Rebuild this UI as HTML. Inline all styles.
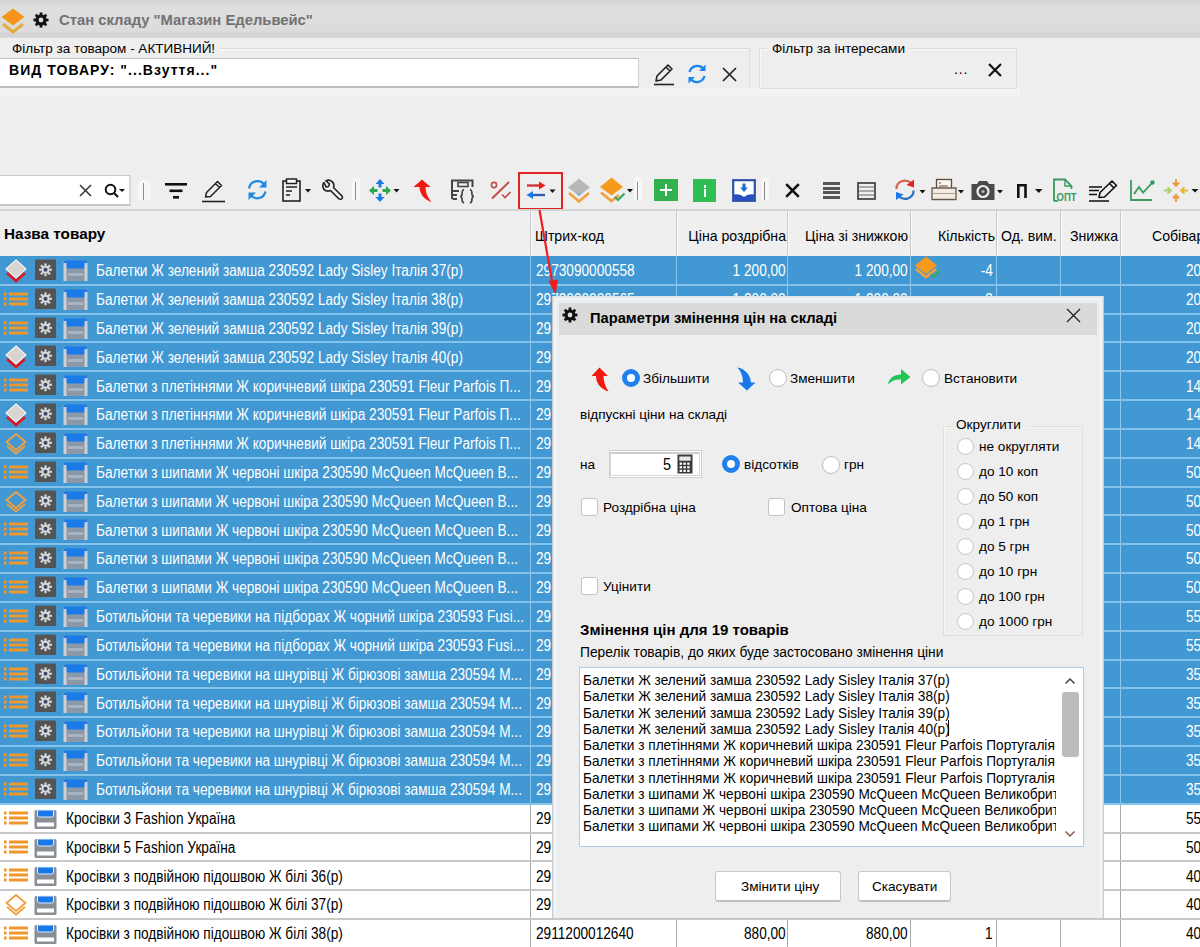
<!DOCTYPE html>
<html><head><meta charset="utf-8">
<style>
*{box-sizing:border-box;margin:0;padding:0}
html,body{width:1200px;height:947px;overflow:hidden;background:#eeeeee;font-family:"Liberation Sans",sans-serif;color:#000}
body{position:relative}
.a{position:absolute}
.t{position:absolute;white-space:nowrap;line-height:1}
svg{display:block}
.r{position:absolute;left:0;width:1200px}
.c{position:absolute;top:1.2px;height:100%;white-space:nowrap;font-size:15.6px;line-height:28px;transform:scaleX(0.875);transform-origin:0 50%}
.cr{transform-origin:100% 50%}
.sel .c{color:#fff}
</style></head><body>

<div class="a" style="left:0;top:0;width:1200px;height:38px;background:linear-gradient(#d2d2d2 0px,#dedede 7px,#dcdcdc 31px,#d3d3d3 34px,#d3d3d3 37px,#e4e4e4 38px)"></div>
<div class="a" style="left:0;top:4px"><svg width="28" height="32" viewBox="0 0 28 32"><path d="M3 20 L13 28 L23 20" fill="none" stroke="#e4ac40" stroke-width="3.2"/><path d="M13 4.5 L24.5 13 L13 21.5 L1.5 13 Z" fill="#f7941a"/></svg></div>
<div class="a" style="left:33px;top:12px"><svg width="16" height="16" viewBox="0 0 16 16"><g fill="#111"><circle cx="8" cy="8" r="5.5"/><rect x="6.6" y="0.5" width="2.8" height="4" transform="rotate(0 8 8)"/><rect x="6.6" y="0.5" width="2.8" height="4" transform="rotate(45 8 8)"/><rect x="6.6" y="0.5" width="2.8" height="4" transform="rotate(90 8 8)"/><rect x="6.6" y="0.5" width="2.8" height="4" transform="rotate(135 8 8)"/><rect x="6.6" y="0.5" width="2.8" height="4" transform="rotate(180 8 8)"/><rect x="6.6" y="0.5" width="2.8" height="4" transform="rotate(225 8 8)"/><rect x="6.6" y="0.5" width="2.8" height="4" transform="rotate(270 8 8)"/><rect x="6.6" y="0.5" width="2.8" height="4" transform="rotate(315 8 8)"/></g><circle cx="8" cy="8" r="2.4" fill="#ddd"/></svg></div>
<div class="t" style="left:59px;top:13px;font-size:14.8px;font-weight:bold;color:#727272">Стан складу "Магазин Едельвейс"</div>
<div class="a" style="left:0;top:48px;width:750px;height:41px;border-top:1px solid #dcdcdc;border-right:1px solid #dcdcdc;box-shadow:inset 0 1px 0 #fafafa"></div>
<div class="a" style="left:0px;top:41px;width:220px;height:16px;background:#eeeeee"></div>
<div class="t" style="left:12px;top:42px;font-size:13.5px">Фільтр за товаром - АКТИВНИЙ!</div>
<div class="a" style="left:0;top:88px;width:1020px;height:8px;background:#f3f3f3"></div>
<div class="a" style="left:0;top:58px;width:639px;height:30px;background:#fff;border-top:1px solid #bdbdbd;border-bottom:2px solid #bdbdbd;border-right:1px solid #d0d0d0"></div>
<div class="t" style="left:9px;top:63px;font-size:14px;font-weight:bold;letter-spacing:1.05px">ВИД ТОВАРУ: "...Взуття..."</div>
<div class="a" style="left:652px;top:62px"><svg width="24" height="24" viewBox="0 0 24 24"><path d="M4 19 L5 14 L16 3 L20 7 L9 18 Z M14 5 L18 9" fill="none" stroke="#222" stroke-width="1.6" stroke-linejoin="round"/><path d="M2 22.5 H22" stroke="#222" stroke-width="1.6"/></svg></div>
<div class="a" style="left:686px;top:63px"><svg width="22" height="22" viewBox="0 0 22 22"><path d="M3.5 9 A8 8 0 0 1 17.5 6" fill="none" stroke="#1a86f0" stroke-width="2.2"/><path d="M19.5 1.5 V8 H13 Z" fill="#1a86f0"/><path d="M18.5 13 A8 8 0 0 1 4.5 16" fill="none" stroke="#1a86f0" stroke-width="2.2"/><path d="M2.5 20.5 V14 H9 Z" fill="#1a86f0"/></svg></div>
<div class="a" style="left:722px;top:67px"><svg width="15" height="15" viewBox="0 0 15 15"><path d="M1 1 L14 14 M14 1 L1 14" stroke="#222" stroke-width="1.7"/></svg></div>
<div class="a" style="left:759px;top:48px;width:258px;height:41px;border:1px solid #dcdcdc;box-shadow:inset 1px 1px 0 #fafafa"></div>
<div class="a" style="left:767px;top:41px;width:142px;height:16px;background:#eeeeee"></div>
<div class="t" style="left:772px;top:42px;font-size:13.6px">Фільтр за інтересами</div>
<div class="t" style="left:954px;top:61.5px;font-size:14px;letter-spacing:0.9px">...</div>
<div class="a" style="left:987px;top:62px"><svg width="16" height="16" viewBox="0 0 16 16"><path d="M2 2 L14 14 M14 2 L2 14" stroke="#111" stroke-width="2.2"/></svg></div>
<div class="a" style="left:0;top:175px;width:131px;height:31px;background:#fff;border-top:1px solid #c8c8c8;border-bottom:2px solid #c8c8c8;border-right:2px solid #d8d8d8"></div>
<div class="a" style="left:79px;top:184px"><svg width="13" height="13" viewBox="0 0 13 13"><path d="M1 1 L12 12 M12 1 L1 12" stroke="#333" stroke-width="1.5"/></svg></div>
<div class="a" style="left:104px;top:183px"><svg width="24" height="16" viewBox="0 0 24 16"><circle cx="6.5" cy="6.5" r="4.8" fill="none" stroke="#111" stroke-width="2"/><path d="M10 10 L14 14" stroke="#111" stroke-width="2.2"/><path d="M15 6 H21 L18 9 Z" fill="#111"/></svg></div>
<!-- toolbar separators -->
<div class="a" style="left:138px;top:180px;width:13px;height:20px;background:#f7f7f7;border-radius:6px 6px 0 0"></div><div class="a" style="left:143px;top:183px;width:1.3px;height:17px;background:#8a8a8a"></div>
<div class="a" style="left:352px;top:177px;width:8px;height:23px;background:#f7f7f7;border-radius:4px 4px 0 0"></div><div class="a" style="left:355px;top:182px;width:1.3px;height:18px;background:#8c8c8c"></div>
<div class="a" style="left:634px;top:177px;width:8px;height:23px;background:#f7f7f7;border-radius:4px 4px 0 0"></div><div class="a" style="left:637px;top:182px;width:1.3px;height:18px;background:#8c8c8c"></div>
<div class="a" style="left:761px;top:177px;width:8px;height:23px;background:#f7f7f7;border-radius:4px 4px 0 0"></div><div class="a" style="left:764px;top:182px;width:1.3px;height:18px;background:#8c8c8c"></div>
<!-- filter -->
<div class="a" style="left:164px;top:181px"><svg width="24" height="20" viewBox="0 0 24 20"><rect x="1" y="2" width="22" height="2.6" fill="#111"/><rect x="5.5" y="8.5" width="13" height="2.6" fill="#111"/><rect x="9" y="15" width="6" height="2.6" fill="#111"/></svg></div>
<!-- pencil -->
<div class="a" style="left:201px;top:178px"><svg width="25" height="25" viewBox="0 0 25 25"><path d="M4.5 19 L5.5 14.5 L16.5 3.5 L20.5 7.5 L9.5 18.5 Z M14.5 5.5 L18.5 9.5" fill="none" stroke="#222" stroke-width="1.5" stroke-linejoin="round"/><path d="M1 23.5 H24" stroke="#222" stroke-width="1.6"/></svg></div>
<!-- blue refresh -->
<div class="a" style="left:246px;top:178px"><svg width="23" height="24" viewBox="0 0 23 24"><path d="M3 10.5 A8.5 8.5 0 0 1 18.5 7" fill="none" stroke="#1f88e5" stroke-width="2.2"/><path d="M20.5 2 V9.5 H13 Z" fill="#1f88e5"/><path d="M19.5 13.5 A8.5 8.5 0 0 1 4.5 17" fill="none" stroke="#1f88e5" stroke-width="2.2"/><path d="M2.5 22 V14.5 H10 Z" fill="#1f88e5"/></svg></div>
<!-- clipboard -->
<div class="a" style="left:281px;top:178px"><svg width="32" height="25" viewBox="0 0 32 25"><rect x="2" y="3" width="17" height="20" fill="none" stroke="#222" stroke-width="1.6"/><rect x="5.5" y="1" width="10" height="4.5" fill="#fff" stroke="#222" stroke-width="1.5"/><path d="M5 9 H16 M5 13 H11 M5 17 H9" stroke="#222" stroke-width="1.5"/><path d="M24 11 H30 L27 14.5 Z" fill="#111"/></svg></div>
<!-- wrench -->
<div class="a" style="left:321px;top:179px"><svg width="23" height="22" viewBox="0 0 23 22"><path d="M3 3.5 C1 6 1.5 10 4.5 11.5 C6.5 12.5 8.5 12 9.5 11.5 L17.5 19.5 C18.5 20.5 20.5 20.5 21 19.5 C21.8 18.5 21.5 17.5 20.5 16.5 L12.5 8.5 C13.2 6.5 13 4 11 2.5 C9 1 6.5 1 5 1.8 L8.5 5 L7.5 7.5 L5 8 Z" fill="none" stroke="#222" stroke-width="1.6" stroke-linejoin="round"/></svg></div>
<!-- move arrows -->
<div class="a" style="left:368px;top:178px"><svg width="34" height="25" viewBox="0 0 34 25"><path d="M12 1 L16.5 6 L13.5 6 L13.5 9.5 L10.5 9.5 L10.5 6 L7.5 6 Z" fill="#1a7ae8"/><path d="M12 24 L16.5 19 L13.5 19 L13.5 15.5 L10.5 15.5 L10.5 19 L7.5 19 Z" fill="#1a7ae8"/><path d="M1 12.5 L6 8 L6 11 L9.5 11 L9.5 14 L6 14 L6 17 Z" fill="#2ea84a"/><path d="M23 12.5 L18 8 L18 11 L14.5 11 L14.5 14 L18 14 L18 17 Z" fill="#2ea84a"/><path d="M25.5 11 H31.5 L28.5 14.5 Z" fill="#111"/></svg></div>
<!-- red up arrow -->
<div class="a" style="left:412px;top:178px"><svg width="21" height="25" viewBox="0 0 21 25"><path d="M10 1.5 L18.5 9 L13.5 9 C13.5 15 15.5 19.5 19.5 24 C12.5 21.5 8 16.5 7.5 9 L1.5 9 Z" fill="#f01a10"/></svg></div>
<!-- records/calc -->
<div class="a" style="left:449px;top:178px"><svg width="27" height="26" viewBox="0 0 27 26"><path d="M3 21 V2.5 H23.5 V9" fill="none" stroke="#444" stroke-width="2"/><rect x="9" y="4.5" width="10" height="4" fill="none" stroke="#444" stroke-width="1.6"/><path d="M3.5 13 H10 M3.5 17 H8 M3.5 21 H8" stroke="#444" stroke-width="1.8"/><path d="M15 11.5 C13 12 13 14 13 16 C13 18 12 18.5 11 18.5 C12 18.5 13 19 13 21 C13 23 13 24.5 15 25 M21 11.5 C23 12 23 14 23 16 C23 18 24 18.5 25 18.5 C24 18.5 23 19 23 21 C23 23 23 24.5 21 25" fill="none" stroke="#444" stroke-width="1.7"/></svg></div>
<!-- percent -->
<div class="a" style="left:489px;top:180px"><svg width="23" height="21" viewBox="0 0 23 21"><circle cx="5" cy="5" r="2.6" fill="none" stroke="#c0504a" stroke-width="1.6"/><path d="M3 18.5 L20 2" stroke="#c0504a" stroke-width="2"/><path d="M13 14.5 L16 17.5 L21.5 12" fill="none" stroke="#c0504a" stroke-width="1.7"/></svg></div>
<!-- red selection box -->
<div class="a" style="left:518px;top:172px;width:45px;height:38px;border:2.5px solid #e32222"></div>
<!-- swap arrows -->
<div class="a" style="left:526px;top:180px"><svg width="32" height="20" viewBox="0 0 32 20"><path d="M1 5.5 H14" stroke="#c83a3a" stroke-width="2.4"/><path d="M13 1.5 L19.5 5.5 L13 9.5 Z" fill="#ee1c1c"/><path d="M6 15 H19" stroke="#2a5fb0" stroke-width="2.4"/><path d="M7 11 L0.5 15 L7 19 Z" fill="#1a78ea"/><path d="M23.5 9.5 H29.5 L26.5 13 Z" fill="#111"/></svg></div>
<!-- gray layers -->
<div class="a" style="left:567px;top:177px"><svg width="24" height="26" viewBox="0 0 24 26"><path d="M2 16 L12 24.5 L22 16" fill="none" stroke="#f0a040" stroke-width="2.6"/><path d="M12 1.5 L23 10.5 L12 19 L1 10.5 Z" fill="#b8b8b8"/><path d="M9 16.5 L12 19 L15 16.5 Z" fill="#6ab0e8"/></svg></div>
<!-- orange layers + check -->
<div class="a" style="left:599px;top:176px"><svg width="36" height="27" viewBox="0 0 36 27"><path d="M2 16.5 L12.5 25 L20 19" fill="none" stroke="#f0a040" stroke-width="2.6"/><path d="M12.5 1.5 L24 11 L12.5 19.5 L1 11 Z" fill="#f59a1a"/><path d="M16 21 L19 24 L25.5 17.5" fill="none" stroke="#3aa860" stroke-width="2.2"/><path d="M28 13 H34 L31 16.5 Z" fill="#111"/></svg></div>
<!-- green plus -->
<div class="a" style="left:654px;top:179px;width:24px;height:22px;background:#33b04f"></div>
<div class="a" style="left:660px;top:189px;width:12px;height:2.4px;background:#fff"></div>
<div class="a" style="left:664.8px;top:184px;width:2.4px;height:12px;background:#fff"></div>
<!-- green i -->
<div class="a" style="left:693px;top:179px;width:23px;height:23px;background:#2fbe52"></div>
<div class="a" style="left:703.5px;top:185px;width:2.5px;height:2.5px;background:#fff"></div>
<div class="a" style="left:703.5px;top:189px;width:2.5px;height:8px;background:#fff"></div>
<!-- blue download -->
<div class="a" style="left:732px;top:179px"><svg width="24" height="23" viewBox="0 0 24 23"><rect x="1.2" y="1.2" width="21.6" height="20.6" fill="#fff" stroke="#2d50a8" stroke-width="2.2"/><path d="M12 13 L16 8.5 L13.5 8.5 L13.5 4.5 L10.5 4.5 L10.5 8.5 L8 8.5 Z" fill="#1a6ad0"/><path d="M2 15.5 C5 15 8 15 12 18 C16 15 19 15 22 15.5 V21 H2 Z" fill="#2a4fc0"/></svg></div>
<!-- X -->
<div class="a" style="left:785px;top:183px"><svg width="15" height="15" viewBox="0 0 15 15"><path d="M1.2 1.2 L13.8 13.8 M13.8 1.2 L1.2 13.8" stroke="#111" stroke-width="2.6"/></svg></div>
<!-- thick list -->
<div class="a" style="left:823px;top:182px;width:17px;height:3px;background:#555"></div>
<div class="a" style="left:823px;top:187px;width:17px;height:3px;background:#555"></div>
<div class="a" style="left:823px;top:191px;width:17px;height:3px;background:#555"></div>
<div class="a" style="left:823px;top:196px;width:17px;height:3px;background:#555"></div>
<!-- window -->
<div class="a" style="left:857px;top:182px"><svg width="19" height="18" viewBox="0 0 19 18"><rect x="1" y="1" width="17" height="16" fill="none" stroke="#333" stroke-width="1.6"/><path d="M2 5 H17 M2 9 H17 M2 13 H17" stroke="#666" stroke-width="1"/></svg></div>
<!-- red/blue refresh -->
<div class="a" style="left:894px;top:178px"><svg width="34" height="23" viewBox="0 0 34 23"><path d="M2.5 11 A8.5 8 0 0 1 17 5" fill="none" stroke="#d86050" stroke-width="2.2"/><path d="M20 1.5 L20 9.5 L12.5 7 Z" fill="#e8202a"/><path d="M19.5 12.5 A8.5 8 0 0 1 5 18.5" fill="none" stroke="#2a70c0" stroke-width="2.2"/><path d="M2 22 L2 14 L9.5 16.5 Z" fill="#1a78ea"/><path d="M25.5 12 H31.5 L28.5 15.5 Z" fill="#111"/></svg></div>
<!-- printer -->
<div class="a" style="left:931px;top:178px"><svg width="34" height="23" viewBox="0 0 34 23"><rect x="5.5" y="1.5" width="15" height="13" fill="#faf6f0" stroke="#5a4a3a" stroke-width="1.3"/><path d="M8 5 H10 M8 8 H17" stroke="#5a4a3a" stroke-width="1"/><path d="M1 10 H25 V21.5 H1 Z" fill="#f3ece4" stroke="#6a5a4a" stroke-width="1.3"/><path d="M2 15.5 H24" stroke="#b0a090" stroke-width="1"/><path d="M27 12 H33 L30 15.5 Z" fill="#111"/></svg></div>
<!-- camera -->
<div class="a" style="left:971px;top:180px"><svg width="34" height="21" viewBox="0 0 34 21"><path d="M0.5 4 H6 L8 1 H16 L18 4 H23.5 V20 H0.5 Z" fill="#4a4a4a"/><circle cx="12" cy="11.5" r="5.5" fill="none" stroke="#eee" stroke-width="2.2"/><circle cx="12" cy="11.5" r="1.5" fill="#bbb"/><path d="M26 10 H32 L29 13.5 Z" fill="#111"/></svg></div>
<!-- П -->
<div class="a" style="left:1016px;top:183px"><svg width="28" height="16" viewBox="0 0 28 16"><path d="M2.3 15 V2.2 H9.5 V15" fill="none" stroke="#111" stroke-width="2.6"/><path d="M19 6 H26.5 L22.8 10 Z" fill="#111"/></svg></div>
<!-- ОПТ doc -->
<div class="a" style="left:1052px;top:178px"><svg width="25" height="25" viewBox="0 0 25 25"><path d="M2 23 V1.5 H13 L19.5 8 V11" fill="none" stroke="#3a9a62" stroke-width="1.8"/><path d="M13 1.5 V8 H19.5" fill="none" stroke="#3a9a62" stroke-width="1.4"/><path d="M2 23 H6" stroke="#3a9a62" stroke-width="1.8"/><text x="4.5" y="22.5" font-family="Liberation Sans" font-weight="bold" font-size="11" fill="#3a9a62" textLength="20" lengthAdjust="spacingAndGlyphs">ОПТ</text></svg></div>
<!-- edit lines -->
<div class="a" style="left:1088px;top:179px"><svg width="31" height="24" viewBox="0 0 31 24"><path d="M1 8 H14 M1 11.5 H11 M1 15.5 H9 M1 22 H21" stroke="#111" stroke-width="1.6"/><path d="M11 18.5 L12 13.5 L24 2 L28.5 6.5 L16.5 18 Z M21.5 4.5 L26 9" fill="none" stroke="#111" stroke-width="1.6" stroke-linejoin="round"/></svg></div>
<!-- chart -->
<div class="a" style="left:1129px;top:179px"><svg width="27" height="23" viewBox="0 0 27 23"><path d="M2 1 V21 H23" fill="none" stroke="#3a9a62" stroke-width="1.8"/><path d="M5 15 L10 8 L14 13.5 L23.5 3.5" fill="none" stroke="#3a9a62" stroke-width="1.8"/><circle cx="23.5" cy="3.5" r="2.2" fill="#3a9a62"/></svg></div>
<!-- orange arrows -->
<div class="a" style="left:1163px;top:177px"><svg width="37" height="27" viewBox="0 0 37 27"><g fill="#f29a40"><path d="M13 2 V8 M10 5.5 L13 9 L16 5.5" stroke="#f29a40" stroke-width="2" fill="none"/><path d="M13 25 V19 M10 21.5 L13 18 L16 21.5" stroke="#f29a40" stroke-width="2" fill="none"/><path d="M1 13.5 H7 M4.5 10.5 L8 13.5 L4.5 16.5" stroke="#a8d070" stroke-width="2" fill="none"/><path d="M25 13.5 H19 M21.5 10.5 L18 13.5 L21.5 16.5" stroke="#e8b830" stroke-width="2" fill="none"/></g><path d="M28.5 12 H35.5 L32 15.5 Z" fill="#111"/></svg></div>

<div class="a" style="left:0;top:209px;width:1200px;height:47px;background:#efefef;border-top:2px solid #d4d4d4"></div>
<div class="a" style="left:530px;top:211px;width:1px;height:45px;background:#c8c8c8"></div><div class="a" style="left:531px;top:211px;width:1px;height:45px;background:#fafafa"></div>
<div class="a" style="left:676px;top:211px;width:1px;height:45px;background:#c8c8c8"></div><div class="a" style="left:677px;top:211px;width:1px;height:45px;background:#fafafa"></div>
<div class="a" style="left:787px;top:211px;width:1px;height:45px;background:#c8c8c8"></div><div class="a" style="left:788px;top:211px;width:1px;height:45px;background:#fafafa"></div>
<div class="a" style="left:910px;top:211px;width:1px;height:45px;background:#c8c8c8"></div><div class="a" style="left:911px;top:211px;width:1px;height:45px;background:#fafafa"></div>
<div class="a" style="left:996px;top:211px;width:1px;height:45px;background:#c8c8c8"></div><div class="a" style="left:997px;top:211px;width:1px;height:45px;background:#fafafa"></div>
<div class="a" style="left:1060px;top:211px;width:1px;height:45px;background:#c8c8c8"></div><div class="a" style="left:1061px;top:211px;width:1px;height:45px;background:#fafafa"></div>
<div class="a" style="left:1120px;top:211px;width:1px;height:45px;background:#c8c8c8"></div><div class="a" style="left:1121px;top:211px;width:1px;height:45px;background:#fafafa"></div>
<div class="t" style="left:4px;top:226px;font-size:15.3px;font-weight:bold">Назва товару</div>
<div class="t" style="left:535px;top:229px;font-size:14.1px">Штрих-код</div>
<div class="t" style="right:414px;top:229px;font-size:14.1px">Ціна роздрібна</div>
<div class="t" style="right:292px;top:229px;font-size:14.1px">Ціна зі знижкою</div>
<div class="t" style="right:205px;top:229px;font-size:14.1px">Кількість</div>
<div class="t" style="left:1001px;top:229px;font-size:14.1px">Од. вим.</div>
<div class="t" style="right:82px;top:229px;font-size:14.1px">Знижка</div>
<div class="t" style="left:1152px;top:229px;font-size:14.1px">Собівар</div>
<div class="a" style="left:0;top:256.0px;width:1200px;height:547.77px;background:#4298d2"></div>
<div class="a" style="left:0;top:803.77px;width:1200px;height:143.23px;background:#fff"></div>
<div class="a" style="left:530px;top:256.0px;width:1px;height:547.77px;background:#8cc8ee"></div>
<div class="a" style="left:530px;top:803.77px;width:1px;height:143.23px;background:#a8a8a8"></div>
<div class="a" style="left:676px;top:256.0px;width:1px;height:547.77px;background:#8cc8ee"></div>
<div class="a" style="left:676px;top:803.77px;width:1px;height:143.23px;background:#a8a8a8"></div>
<div class="a" style="left:787px;top:256.0px;width:1px;height:547.77px;background:#8cc8ee"></div>
<div class="a" style="left:787px;top:803.77px;width:1px;height:143.23px;background:#a8a8a8"></div>
<div class="a" style="left:910px;top:256.0px;width:1px;height:547.77px;background:#8cc8ee"></div>
<div class="a" style="left:910px;top:803.77px;width:1px;height:143.23px;background:#a8a8a8"></div>
<div class="a" style="left:996px;top:256.0px;width:1px;height:547.77px;background:#8cc8ee"></div>
<div class="a" style="left:996px;top:803.77px;width:1px;height:143.23px;background:#a8a8a8"></div>
<div class="a" style="left:1060px;top:256.0px;width:1px;height:547.77px;background:#8cc8ee"></div>
<div class="a" style="left:1060px;top:803.77px;width:1px;height:143.23px;background:#a8a8a8"></div>
<div class="a" style="left:1120px;top:256.0px;width:1px;height:547.77px;background:#8cc8ee"></div>
<div class="a" style="left:1120px;top:803.77px;width:1px;height:143.23px;background:#a8a8a8"></div>
<div class="a" style="left:0;top:283.83px;width:1200px;height:2px;background:#84c4ec"></div>
<div class="a" style="left:0;top:312.66px;width:1200px;height:2px;background:#84c4ec"></div>
<div class="a" style="left:0;top:341.49px;width:1200px;height:2px;background:#84c4ec"></div>
<div class="a" style="left:0;top:370.32px;width:1200px;height:2px;background:#84c4ec"></div>
<div class="a" style="left:0;top:399.15px;width:1200px;height:2px;background:#84c4ec"></div>
<div class="a" style="left:0;top:427.98px;width:1200px;height:2px;background:#84c4ec"></div>
<div class="a" style="left:0;top:456.81px;width:1200px;height:2px;background:#84c4ec"></div>
<div class="a" style="left:0;top:485.64px;width:1200px;height:2px;background:#84c4ec"></div>
<div class="a" style="left:0;top:514.47px;width:1200px;height:2px;background:#84c4ec"></div>
<div class="a" style="left:0;top:543.30px;width:1200px;height:2px;background:#84c4ec"></div>
<div class="a" style="left:0;top:572.13px;width:1200px;height:2px;background:#84c4ec"></div>
<div class="a" style="left:0;top:600.96px;width:1200px;height:2px;background:#84c4ec"></div>
<div class="a" style="left:0;top:629.79px;width:1200px;height:2px;background:#84c4ec"></div>
<div class="a" style="left:0;top:658.62px;width:1200px;height:2px;background:#84c4ec"></div>
<div class="a" style="left:0;top:687.45px;width:1200px;height:2px;background:#84c4ec"></div>
<div class="a" style="left:0;top:716.28px;width:1200px;height:2px;background:#84c4ec"></div>
<div class="a" style="left:0;top:745.11px;width:1200px;height:2px;background:#84c4ec"></div>
<div class="a" style="left:0;top:773.94px;width:1200px;height:2px;background:#84c4ec"></div>
<div class="a" style="left:0;top:802.77px;width:1200px;height:2px;background:#84c4ec"></div>
<div class="a" style="left:0;top:831.60px;width:1200px;height:2px;background:#c8c8c8"></div>
<div class="a" style="left:0;top:860.43px;width:1200px;height:2px;background:#c8c8c8"></div>
<div class="a" style="left:0;top:889.26px;width:1200px;height:2px;background:#c8c8c8"></div>
<div class="a" style="left:0;top:918.09px;width:1200px;height:2px;background:#c8c8c8"></div>
<div class="a" style="left:0;top:946.92px;width:1200px;height:2px;background:#c8c8c8"></div>
<div class="r sel" style="top:256.00px;height:28.83px">
<div class="a" style="left:4px;top:3px"><svg width="24" height="24" viewBox="0 0 24 24"><path d="M12 1 L22 10 L12 19 L2 10 Z" fill="#d9d4d0" stroke="#f4f4f4" stroke-width="1.2"/><path d="M3 14 L12 22 L21 14" fill="none" stroke="#e0161b" stroke-width="2.6"/></svg></div>
<div class="a" style="left:34px;top:2px"><svg width="23" height="23" viewBox="0 0 23 23"><rect x="1" y="1.5" width="21" height="20.5" rx="1" fill="#545454"/><g fill="#d8d8d8"><rect x="10.4" y="5.4" width="2.2" height="2.6" transform="rotate(0 11.5 11.8)"/><rect x="10.4" y="5.4" width="2.2" height="2.6" transform="rotate(45 11.5 11.8)"/><rect x="10.4" y="5.4" width="2.2" height="2.6" transform="rotate(90 11.5 11.8)"/><rect x="10.4" y="5.4" width="2.2" height="2.6" transform="rotate(135 11.5 11.8)"/><rect x="10.4" y="5.4" width="2.2" height="2.6" transform="rotate(180 11.5 11.8)"/><rect x="10.4" y="5.4" width="2.2" height="2.6" transform="rotate(225 11.5 11.8)"/><rect x="10.4" y="5.4" width="2.2" height="2.6" transform="rotate(270 11.5 11.8)"/><rect x="10.4" y="5.4" width="2.2" height="2.6" transform="rotate(315 11.5 11.8)"/><circle cx="11.5" cy="11.8" r="4"/></g><circle cx="11.5" cy="11.8" r="2" fill="#3a4a60"/></svg></div>
<div class="a" style="left:63px;top:3px"><svg width="25" height="23" viewBox="0 0 25 23"><rect x="3" y="9" width="19" height="13" fill="#8a98a8"/><rect x="5" y="14" width="15" height="3" fill="#a8b4c0"/><path d="M1 3 Q1 1.5 2.5 1.5 H22.5 Q24 1.5 24 3 L21 9.5 H4 Z" fill="#1a7ae8"/><rect x="0.5" y="4" width="3" height="18" fill="#e8d8d8" opacity="0.85"/><rect x="21.5" y="4" width="3" height="18" fill="#e8d8d8" opacity="0.85"/></svg></div>
<div class="c" style="left:96px">Балетки Ж зелений замша 230592 Lady Sisley Італія 37(р)</div>
<div class="c" style="left:536px">2973090000558</div>
<div class="c cr" style="right:414px">1 200,00</div>
<div class="c cr" style="right:292px">1 200,00</div>
<div class="c cr" style="right:207px">-4</div>
<div class="a" style="left:914px;top:-1px"><svg width="28" height="24" viewBox="0 0 28 24"><path d="M2 14 L12 22 L22 14" fill="none" stroke="#f0a040" stroke-width="2.6"/><path d="M12 1.5 L23 10.5 L12 19 L1 10.5 Z" fill="#f59a1a"/><path d="M17 19 L20 22 L26 15.5" fill="none" stroke="#3aa860" stroke-width="2"/></svg></div>
<div class="c" style="left:1186px">200,00</div>
</div>
<div class="r sel" style="top:284.83px;height:28.83px">
<div class="a" style="left:4px;top:3px"><svg width="26" height="24" viewBox="0 0 26 24"><g fill="#f0962a"><rect x="0" y="4.5" width="2.6" height="3"/><rect x="0" y="9.5" width="2.6" height="3"/><rect x="0" y="14.5" width="2.6" height="3"/><rect x="5" y="4.5" width="19" height="3"/><rect x="5" y="9.5" width="19" height="3"/><rect x="5" y="14.5" width="19" height="3"/></g></svg></div>
<div class="a" style="left:34px;top:2px"><svg width="23" height="23" viewBox="0 0 23 23"><rect x="1" y="1.5" width="21" height="20.5" rx="1" fill="#545454"/><g fill="#d8d8d8"><rect x="10.4" y="5.4" width="2.2" height="2.6" transform="rotate(0 11.5 11.8)"/><rect x="10.4" y="5.4" width="2.2" height="2.6" transform="rotate(45 11.5 11.8)"/><rect x="10.4" y="5.4" width="2.2" height="2.6" transform="rotate(90 11.5 11.8)"/><rect x="10.4" y="5.4" width="2.2" height="2.6" transform="rotate(135 11.5 11.8)"/><rect x="10.4" y="5.4" width="2.2" height="2.6" transform="rotate(180 11.5 11.8)"/><rect x="10.4" y="5.4" width="2.2" height="2.6" transform="rotate(225 11.5 11.8)"/><rect x="10.4" y="5.4" width="2.2" height="2.6" transform="rotate(270 11.5 11.8)"/><rect x="10.4" y="5.4" width="2.2" height="2.6" transform="rotate(315 11.5 11.8)"/><circle cx="11.5" cy="11.8" r="4"/></g><circle cx="11.5" cy="11.8" r="2" fill="#3a4a60"/></svg></div>
<div class="a" style="left:63px;top:3px"><svg width="25" height="23" viewBox="0 0 25 23"><rect x="3" y="9" width="19" height="13" fill="#8a98a8"/><rect x="5" y="14" width="15" height="3" fill="#a8b4c0"/><path d="M1 3 Q1 1.5 2.5 1.5 H22.5 Q24 1.5 24 3 L21 9.5 H4 Z" fill="#1a7ae8"/><rect x="0.5" y="4" width="3" height="18" fill="#e8d8d8" opacity="0.85"/><rect x="21.5" y="4" width="3" height="18" fill="#e8d8d8" opacity="0.85"/></svg></div>
<div class="c" style="left:96px">Балетки Ж зелений замша 230592 Lady Sisley Італія 38(р)</div>
<div class="c" style="left:536px">2973090000565</div>
<div class="c cr" style="right:414px">1 200,00</div>
<div class="c cr" style="right:292px">1 200,00</div>
<div class="c cr" style="right:207px">-3</div>
<div class="c" style="left:1186px">200,00</div>
</div>
<div class="r sel" style="top:313.66px;height:28.83px">
<div class="a" style="left:4px;top:3px"><svg width="26" height="24" viewBox="0 0 26 24"><g fill="#f0962a"><rect x="0" y="4.5" width="2.6" height="3"/><rect x="0" y="9.5" width="2.6" height="3"/><rect x="0" y="14.5" width="2.6" height="3"/><rect x="5" y="4.5" width="19" height="3"/><rect x="5" y="9.5" width="19" height="3"/><rect x="5" y="14.5" width="19" height="3"/></g></svg></div>
<div class="a" style="left:34px;top:2px"><svg width="23" height="23" viewBox="0 0 23 23"><rect x="1" y="1.5" width="21" height="20.5" rx="1" fill="#545454"/><g fill="#d8d8d8"><rect x="10.4" y="5.4" width="2.2" height="2.6" transform="rotate(0 11.5 11.8)"/><rect x="10.4" y="5.4" width="2.2" height="2.6" transform="rotate(45 11.5 11.8)"/><rect x="10.4" y="5.4" width="2.2" height="2.6" transform="rotate(90 11.5 11.8)"/><rect x="10.4" y="5.4" width="2.2" height="2.6" transform="rotate(135 11.5 11.8)"/><rect x="10.4" y="5.4" width="2.2" height="2.6" transform="rotate(180 11.5 11.8)"/><rect x="10.4" y="5.4" width="2.2" height="2.6" transform="rotate(225 11.5 11.8)"/><rect x="10.4" y="5.4" width="2.2" height="2.6" transform="rotate(270 11.5 11.8)"/><rect x="10.4" y="5.4" width="2.2" height="2.6" transform="rotate(315 11.5 11.8)"/><circle cx="11.5" cy="11.8" r="4"/></g><circle cx="11.5" cy="11.8" r="2" fill="#3a4a60"/></svg></div>
<div class="a" style="left:63px;top:3px"><svg width="25" height="23" viewBox="0 0 25 23"><rect x="3" y="9" width="19" height="13" fill="#8a98a8"/><rect x="5" y="14" width="15" height="3" fill="#a8b4c0"/><path d="M1 3 Q1 1.5 2.5 1.5 H22.5 Q24 1.5 24 3 L21 9.5 H4 Z" fill="#1a7ae8"/><rect x="0.5" y="4" width="3" height="18" fill="#e8d8d8" opacity="0.85"/><rect x="21.5" y="4" width="3" height="18" fill="#e8d8d8" opacity="0.85"/></svg></div>
<div class="c" style="left:96px">Балетки Ж зелений замша 230592 Lady Sisley Італія 39(р)</div>
<div class="c" style="left:536px">2973090000572</div>
<div class="c cr" style="right:414px">1 200,00</div>
<div class="c cr" style="right:292px">1 200,00</div>
<div class="c cr" style="right:207px">-2</div>
<div class="c" style="left:1186px">200,00</div>
</div>
<div class="r sel" style="top:342.49px;height:28.83px">
<div class="a" style="left:4px;top:3px"><svg width="24" height="24" viewBox="0 0 24 24"><path d="M12 1 L22 10 L12 19 L2 10 Z" fill="#d9d4d0" stroke="#f4f4f4" stroke-width="1.2"/><path d="M3 14 L12 22 L21 14" fill="none" stroke="#e0161b" stroke-width="2.6"/></svg></div>
<div class="a" style="left:34px;top:2px"><svg width="23" height="23" viewBox="0 0 23 23"><rect x="1" y="1.5" width="21" height="20.5" rx="1" fill="#545454"/><g fill="#d8d8d8"><rect x="10.4" y="5.4" width="2.2" height="2.6" transform="rotate(0 11.5 11.8)"/><rect x="10.4" y="5.4" width="2.2" height="2.6" transform="rotate(45 11.5 11.8)"/><rect x="10.4" y="5.4" width="2.2" height="2.6" transform="rotate(90 11.5 11.8)"/><rect x="10.4" y="5.4" width="2.2" height="2.6" transform="rotate(135 11.5 11.8)"/><rect x="10.4" y="5.4" width="2.2" height="2.6" transform="rotate(180 11.5 11.8)"/><rect x="10.4" y="5.4" width="2.2" height="2.6" transform="rotate(225 11.5 11.8)"/><rect x="10.4" y="5.4" width="2.2" height="2.6" transform="rotate(270 11.5 11.8)"/><rect x="10.4" y="5.4" width="2.2" height="2.6" transform="rotate(315 11.5 11.8)"/><circle cx="11.5" cy="11.8" r="4"/></g><circle cx="11.5" cy="11.8" r="2" fill="#3a4a60"/></svg></div>
<div class="a" style="left:63px;top:3px"><svg width="25" height="23" viewBox="0 0 25 23"><rect x="3" y="9" width="19" height="13" fill="#8a98a8"/><rect x="5" y="14" width="15" height="3" fill="#a8b4c0"/><path d="M1 3 Q1 1.5 2.5 1.5 H22.5 Q24 1.5 24 3 L21 9.5 H4 Z" fill="#1a7ae8"/><rect x="0.5" y="4" width="3" height="18" fill="#e8d8d8" opacity="0.85"/><rect x="21.5" y="4" width="3" height="18" fill="#e8d8d8" opacity="0.85"/></svg></div>
<div class="c" style="left:96px">Балетки Ж зелений замша 230592 Lady Sisley Італія 40(р)</div>
<div class="c" style="left:536px">2973090000589</div>
<div class="c cr" style="right:414px">1 200,00</div>
<div class="c cr" style="right:292px">1 200,00</div>
<div class="c cr" style="right:207px">-1</div>
<div class="c" style="left:1186px">200,00</div>
</div>
<div class="r sel" style="top:371.32px;height:28.83px">
<div class="a" style="left:4px;top:3px"><svg width="26" height="24" viewBox="0 0 26 24"><g fill="#f0962a"><rect x="0" y="4.5" width="2.6" height="3"/><rect x="0" y="9.5" width="2.6" height="3"/><rect x="0" y="14.5" width="2.6" height="3"/><rect x="5" y="4.5" width="19" height="3"/><rect x="5" y="9.5" width="19" height="3"/><rect x="5" y="14.5" width="19" height="3"/></g></svg></div>
<div class="a" style="left:34px;top:2px"><svg width="23" height="23" viewBox="0 0 23 23"><rect x="1" y="1.5" width="21" height="20.5" rx="1" fill="#545454"/><g fill="#d8d8d8"><rect x="10.4" y="5.4" width="2.2" height="2.6" transform="rotate(0 11.5 11.8)"/><rect x="10.4" y="5.4" width="2.2" height="2.6" transform="rotate(45 11.5 11.8)"/><rect x="10.4" y="5.4" width="2.2" height="2.6" transform="rotate(90 11.5 11.8)"/><rect x="10.4" y="5.4" width="2.2" height="2.6" transform="rotate(135 11.5 11.8)"/><rect x="10.4" y="5.4" width="2.2" height="2.6" transform="rotate(180 11.5 11.8)"/><rect x="10.4" y="5.4" width="2.2" height="2.6" transform="rotate(225 11.5 11.8)"/><rect x="10.4" y="5.4" width="2.2" height="2.6" transform="rotate(270 11.5 11.8)"/><rect x="10.4" y="5.4" width="2.2" height="2.6" transform="rotate(315 11.5 11.8)"/><circle cx="11.5" cy="11.8" r="4"/></g><circle cx="11.5" cy="11.8" r="2" fill="#3a4a60"/></svg></div>
<div class="a" style="left:63px;top:3px"><svg width="25" height="23" viewBox="0 0 25 23"><rect x="3" y="9" width="19" height="13" fill="#8a98a8"/><rect x="5" y="14" width="15" height="3" fill="#a8b4c0"/><path d="M1 3 Q1 1.5 2.5 1.5 H22.5 Q24 1.5 24 3 L21 9.5 H4 Z" fill="#1a7ae8"/><rect x="0.5" y="4" width="3" height="18" fill="#e8d8d8" opacity="0.85"/><rect x="21.5" y="4" width="3" height="18" fill="#e8d8d8" opacity="0.85"/></svg></div>
<div class="c" style="left:96px">Балетки з плетіннями Ж коричневий шкіра 230591 Fleur Parfois П...</div>
<div class="c" style="left:536px">2973090000596</div>
<div class="c cr" style="right:414px">980,00</div>
<div class="c cr" style="right:292px">980,00</div>
<div class="c cr" style="right:207px">1</div>
<div class="c" style="left:1186px">140,00</div>
</div>
<div class="r sel" style="top:400.15px;height:28.83px">
<div class="a" style="left:4px;top:3px"><svg width="24" height="24" viewBox="0 0 24 24"><path d="M12 1 L22 10 L12 19 L2 10 Z" fill="#d9d4d0" stroke="#f4f4f4" stroke-width="1.2"/><path d="M3 14 L12 22 L21 14" fill="none" stroke="#e0161b" stroke-width="2.6"/></svg></div>
<div class="a" style="left:34px;top:2px"><svg width="23" height="23" viewBox="0 0 23 23"><rect x="1" y="1.5" width="21" height="20.5" rx="1" fill="#545454"/><g fill="#d8d8d8"><rect x="10.4" y="5.4" width="2.2" height="2.6" transform="rotate(0 11.5 11.8)"/><rect x="10.4" y="5.4" width="2.2" height="2.6" transform="rotate(45 11.5 11.8)"/><rect x="10.4" y="5.4" width="2.2" height="2.6" transform="rotate(90 11.5 11.8)"/><rect x="10.4" y="5.4" width="2.2" height="2.6" transform="rotate(135 11.5 11.8)"/><rect x="10.4" y="5.4" width="2.2" height="2.6" transform="rotate(180 11.5 11.8)"/><rect x="10.4" y="5.4" width="2.2" height="2.6" transform="rotate(225 11.5 11.8)"/><rect x="10.4" y="5.4" width="2.2" height="2.6" transform="rotate(270 11.5 11.8)"/><rect x="10.4" y="5.4" width="2.2" height="2.6" transform="rotate(315 11.5 11.8)"/><circle cx="11.5" cy="11.8" r="4"/></g><circle cx="11.5" cy="11.8" r="2" fill="#3a4a60"/></svg></div>
<div class="a" style="left:63px;top:3px"><svg width="25" height="23" viewBox="0 0 25 23"><rect x="3" y="9" width="19" height="13" fill="#8a98a8"/><rect x="5" y="14" width="15" height="3" fill="#a8b4c0"/><path d="M1 3 Q1 1.5 2.5 1.5 H22.5 Q24 1.5 24 3 L21 9.5 H4 Z" fill="#1a7ae8"/><rect x="0.5" y="4" width="3" height="18" fill="#e8d8d8" opacity="0.85"/><rect x="21.5" y="4" width="3" height="18" fill="#e8d8d8" opacity="0.85"/></svg></div>
<div class="c" style="left:96px">Балетки з плетіннями Ж коричневий шкіра 230591 Fleur Parfois П...</div>
<div class="c" style="left:536px">2973090000602</div>
<div class="c cr" style="right:414px">980,00</div>
<div class="c cr" style="right:292px">980,00</div>
<div class="c cr" style="right:207px">1</div>
<div class="c" style="left:1186px">140,00</div>
</div>
<div class="r sel" style="top:428.98px;height:28.83px">
<div class="a" style="left:4px;top:3px"><svg width="24" height="24" viewBox="0 0 24 24"><path d="M12 2 L21.5 10 L12 18 L2.5 10 Z" fill="none" stroke="#f0a040" stroke-width="1.8"/><path d="M3 14 L12 21.5 L21 14" fill="none" stroke="#f0a040" stroke-width="1.8"/></svg></div>
<div class="a" style="left:34px;top:2px"><svg width="23" height="23" viewBox="0 0 23 23"><rect x="1" y="1.5" width="21" height="20.5" rx="1" fill="#545454"/><g fill="#d8d8d8"><rect x="10.4" y="5.4" width="2.2" height="2.6" transform="rotate(0 11.5 11.8)"/><rect x="10.4" y="5.4" width="2.2" height="2.6" transform="rotate(45 11.5 11.8)"/><rect x="10.4" y="5.4" width="2.2" height="2.6" transform="rotate(90 11.5 11.8)"/><rect x="10.4" y="5.4" width="2.2" height="2.6" transform="rotate(135 11.5 11.8)"/><rect x="10.4" y="5.4" width="2.2" height="2.6" transform="rotate(180 11.5 11.8)"/><rect x="10.4" y="5.4" width="2.2" height="2.6" transform="rotate(225 11.5 11.8)"/><rect x="10.4" y="5.4" width="2.2" height="2.6" transform="rotate(270 11.5 11.8)"/><rect x="10.4" y="5.4" width="2.2" height="2.6" transform="rotate(315 11.5 11.8)"/><circle cx="11.5" cy="11.8" r="4"/></g><circle cx="11.5" cy="11.8" r="2" fill="#3a4a60"/></svg></div>
<div class="a" style="left:63px;top:3px"><svg width="25" height="23" viewBox="0 0 25 23"><rect x="3" y="9" width="19" height="13" fill="#8a98a8"/><rect x="5" y="14" width="15" height="3" fill="#a8b4c0"/><path d="M1 3 Q1 1.5 2.5 1.5 H22.5 Q24 1.5 24 3 L21 9.5 H4 Z" fill="#1a7ae8"/><rect x="0.5" y="4" width="3" height="18" fill="#e8d8d8" opacity="0.85"/><rect x="21.5" y="4" width="3" height="18" fill="#e8d8d8" opacity="0.85"/></svg></div>
<div class="c" style="left:96px">Балетки з плетіннями Ж коричневий шкіра 230591 Fleur Parfois П...</div>
<div class="c" style="left:536px">2973090000619</div>
<div class="c cr" style="right:414px">980,00</div>
<div class="c cr" style="right:292px">980,00</div>
<div class="c cr" style="right:207px">1</div>
<div class="c" style="left:1186px">140,00</div>
</div>
<div class="r sel" style="top:457.81px;height:28.83px">
<div class="a" style="left:4px;top:3px"><svg width="26" height="24" viewBox="0 0 26 24"><g fill="#f0962a"><rect x="0" y="4.5" width="2.6" height="3"/><rect x="0" y="9.5" width="2.6" height="3"/><rect x="0" y="14.5" width="2.6" height="3"/><rect x="5" y="4.5" width="19" height="3"/><rect x="5" y="9.5" width="19" height="3"/><rect x="5" y="14.5" width="19" height="3"/></g></svg></div>
<div class="a" style="left:34px;top:2px"><svg width="23" height="23" viewBox="0 0 23 23"><rect x="1" y="1.5" width="21" height="20.5" rx="1" fill="#545454"/><g fill="#d8d8d8"><rect x="10.4" y="5.4" width="2.2" height="2.6" transform="rotate(0 11.5 11.8)"/><rect x="10.4" y="5.4" width="2.2" height="2.6" transform="rotate(45 11.5 11.8)"/><rect x="10.4" y="5.4" width="2.2" height="2.6" transform="rotate(90 11.5 11.8)"/><rect x="10.4" y="5.4" width="2.2" height="2.6" transform="rotate(135 11.5 11.8)"/><rect x="10.4" y="5.4" width="2.2" height="2.6" transform="rotate(180 11.5 11.8)"/><rect x="10.4" y="5.4" width="2.2" height="2.6" transform="rotate(225 11.5 11.8)"/><rect x="10.4" y="5.4" width="2.2" height="2.6" transform="rotate(270 11.5 11.8)"/><rect x="10.4" y="5.4" width="2.2" height="2.6" transform="rotate(315 11.5 11.8)"/><circle cx="11.5" cy="11.8" r="4"/></g><circle cx="11.5" cy="11.8" r="2" fill="#3a4a60"/></svg></div>
<div class="a" style="left:63px;top:3px"><svg width="25" height="23" viewBox="0 0 25 23"><rect x="3" y="9" width="19" height="13" fill="#8a98a8"/><rect x="5" y="14" width="15" height="3" fill="#a8b4c0"/><path d="M1 3 Q1 1.5 2.5 1.5 H22.5 Q24 1.5 24 3 L21 9.5 H4 Z" fill="#1a7ae8"/><rect x="0.5" y="4" width="3" height="18" fill="#e8d8d8" opacity="0.85"/><rect x="21.5" y="4" width="3" height="18" fill="#e8d8d8" opacity="0.85"/></svg></div>
<div class="c" style="left:96px">Балетки з шипами Ж червоні шкіра 230590 McQueen McQueen B...</div>
<div class="c" style="left:536px">2973090000626</div>
<div class="c cr" style="right:414px">1 500,00</div>
<div class="c cr" style="right:292px">1 500,00</div>
<div class="c cr" style="right:207px">1</div>
<div class="c" style="left:1186px">500,00</div>
</div>
<div class="r sel" style="top:486.64px;height:28.83px">
<div class="a" style="left:4px;top:3px"><svg width="24" height="24" viewBox="0 0 24 24"><path d="M12 2 L21.5 10 L12 18 L2.5 10 Z" fill="none" stroke="#f0a040" stroke-width="1.8"/><path d="M3 14 L12 21.5 L21 14" fill="none" stroke="#f0a040" stroke-width="1.8"/></svg></div>
<div class="a" style="left:34px;top:2px"><svg width="23" height="23" viewBox="0 0 23 23"><rect x="1" y="1.5" width="21" height="20.5" rx="1" fill="#545454"/><g fill="#d8d8d8"><rect x="10.4" y="5.4" width="2.2" height="2.6" transform="rotate(0 11.5 11.8)"/><rect x="10.4" y="5.4" width="2.2" height="2.6" transform="rotate(45 11.5 11.8)"/><rect x="10.4" y="5.4" width="2.2" height="2.6" transform="rotate(90 11.5 11.8)"/><rect x="10.4" y="5.4" width="2.2" height="2.6" transform="rotate(135 11.5 11.8)"/><rect x="10.4" y="5.4" width="2.2" height="2.6" transform="rotate(180 11.5 11.8)"/><rect x="10.4" y="5.4" width="2.2" height="2.6" transform="rotate(225 11.5 11.8)"/><rect x="10.4" y="5.4" width="2.2" height="2.6" transform="rotate(270 11.5 11.8)"/><rect x="10.4" y="5.4" width="2.2" height="2.6" transform="rotate(315 11.5 11.8)"/><circle cx="11.5" cy="11.8" r="4"/></g><circle cx="11.5" cy="11.8" r="2" fill="#3a4a60"/></svg></div>
<div class="a" style="left:63px;top:3px"><svg width="25" height="23" viewBox="0 0 25 23"><rect x="3" y="9" width="19" height="13" fill="#8a98a8"/><rect x="5" y="14" width="15" height="3" fill="#a8b4c0"/><path d="M1 3 Q1 1.5 2.5 1.5 H22.5 Q24 1.5 24 3 L21 9.5 H4 Z" fill="#1a7ae8"/><rect x="0.5" y="4" width="3" height="18" fill="#e8d8d8" opacity="0.85"/><rect x="21.5" y="4" width="3" height="18" fill="#e8d8d8" opacity="0.85"/></svg></div>
<div class="c" style="left:96px">Балетки з шипами Ж червоні шкіра 230590 McQueen McQueen B...</div>
<div class="c" style="left:536px">2973090000633</div>
<div class="c cr" style="right:414px">1 500,00</div>
<div class="c cr" style="right:292px">1 500,00</div>
<div class="c cr" style="right:207px">1</div>
<div class="c" style="left:1186px">500,00</div>
</div>
<div class="r sel" style="top:515.47px;height:28.83px">
<div class="a" style="left:4px;top:3px"><svg width="26" height="24" viewBox="0 0 26 24"><g fill="#f0962a"><rect x="0" y="4.5" width="2.6" height="3"/><rect x="0" y="9.5" width="2.6" height="3"/><rect x="0" y="14.5" width="2.6" height="3"/><rect x="5" y="4.5" width="19" height="3"/><rect x="5" y="9.5" width="19" height="3"/><rect x="5" y="14.5" width="19" height="3"/></g></svg></div>
<div class="a" style="left:34px;top:2px"><svg width="23" height="23" viewBox="0 0 23 23"><rect x="1" y="1.5" width="21" height="20.5" rx="1" fill="#545454"/><g fill="#d8d8d8"><rect x="10.4" y="5.4" width="2.2" height="2.6" transform="rotate(0 11.5 11.8)"/><rect x="10.4" y="5.4" width="2.2" height="2.6" transform="rotate(45 11.5 11.8)"/><rect x="10.4" y="5.4" width="2.2" height="2.6" transform="rotate(90 11.5 11.8)"/><rect x="10.4" y="5.4" width="2.2" height="2.6" transform="rotate(135 11.5 11.8)"/><rect x="10.4" y="5.4" width="2.2" height="2.6" transform="rotate(180 11.5 11.8)"/><rect x="10.4" y="5.4" width="2.2" height="2.6" transform="rotate(225 11.5 11.8)"/><rect x="10.4" y="5.4" width="2.2" height="2.6" transform="rotate(270 11.5 11.8)"/><rect x="10.4" y="5.4" width="2.2" height="2.6" transform="rotate(315 11.5 11.8)"/><circle cx="11.5" cy="11.8" r="4"/></g><circle cx="11.5" cy="11.8" r="2" fill="#3a4a60"/></svg></div>
<div class="a" style="left:63px;top:3px"><svg width="25" height="23" viewBox="0 0 25 23"><rect x="3" y="9" width="19" height="13" fill="#8a98a8"/><rect x="5" y="14" width="15" height="3" fill="#a8b4c0"/><path d="M1 3 Q1 1.5 2.5 1.5 H22.5 Q24 1.5 24 3 L21 9.5 H4 Z" fill="#1a7ae8"/><rect x="0.5" y="4" width="3" height="18" fill="#e8d8d8" opacity="0.85"/><rect x="21.5" y="4" width="3" height="18" fill="#e8d8d8" opacity="0.85"/></svg></div>
<div class="c" style="left:96px">Балетки з шипами Ж червоні шкіра 230590 McQueen McQueen B...</div>
<div class="c" style="left:536px">2973090000640</div>
<div class="c cr" style="right:414px">1 500,00</div>
<div class="c cr" style="right:292px">1 500,00</div>
<div class="c cr" style="right:207px">1</div>
<div class="c" style="left:1186px">500,00</div>
</div>
<div class="r sel" style="top:544.30px;height:28.83px">
<div class="a" style="left:4px;top:3px"><svg width="26" height="24" viewBox="0 0 26 24"><g fill="#f0962a"><rect x="0" y="4.5" width="2.6" height="3"/><rect x="0" y="9.5" width="2.6" height="3"/><rect x="0" y="14.5" width="2.6" height="3"/><rect x="5" y="4.5" width="19" height="3"/><rect x="5" y="9.5" width="19" height="3"/><rect x="5" y="14.5" width="19" height="3"/></g></svg></div>
<div class="a" style="left:34px;top:2px"><svg width="23" height="23" viewBox="0 0 23 23"><rect x="1" y="1.5" width="21" height="20.5" rx="1" fill="#545454"/><g fill="#d8d8d8"><rect x="10.4" y="5.4" width="2.2" height="2.6" transform="rotate(0 11.5 11.8)"/><rect x="10.4" y="5.4" width="2.2" height="2.6" transform="rotate(45 11.5 11.8)"/><rect x="10.4" y="5.4" width="2.2" height="2.6" transform="rotate(90 11.5 11.8)"/><rect x="10.4" y="5.4" width="2.2" height="2.6" transform="rotate(135 11.5 11.8)"/><rect x="10.4" y="5.4" width="2.2" height="2.6" transform="rotate(180 11.5 11.8)"/><rect x="10.4" y="5.4" width="2.2" height="2.6" transform="rotate(225 11.5 11.8)"/><rect x="10.4" y="5.4" width="2.2" height="2.6" transform="rotate(270 11.5 11.8)"/><rect x="10.4" y="5.4" width="2.2" height="2.6" transform="rotate(315 11.5 11.8)"/><circle cx="11.5" cy="11.8" r="4"/></g><circle cx="11.5" cy="11.8" r="2" fill="#3a4a60"/></svg></div>
<div class="a" style="left:63px;top:3px"><svg width="25" height="23" viewBox="0 0 25 23"><rect x="3" y="9" width="19" height="13" fill="#8a98a8"/><rect x="5" y="14" width="15" height="3" fill="#a8b4c0"/><path d="M1 3 Q1 1.5 2.5 1.5 H22.5 Q24 1.5 24 3 L21 9.5 H4 Z" fill="#1a7ae8"/><rect x="0.5" y="4" width="3" height="18" fill="#e8d8d8" opacity="0.85"/><rect x="21.5" y="4" width="3" height="18" fill="#e8d8d8" opacity="0.85"/></svg></div>
<div class="c" style="left:96px">Балетки з шипами Ж червоні шкіра 230590 McQueen McQueen B...</div>
<div class="c" style="left:536px">2973090000657</div>
<div class="c cr" style="right:414px">1 500,00</div>
<div class="c cr" style="right:292px">1 500,00</div>
<div class="c cr" style="right:207px">1</div>
<div class="c" style="left:1186px">500,00</div>
</div>
<div class="r sel" style="top:573.13px;height:28.83px">
<div class="a" style="left:4px;top:3px"><svg width="26" height="24" viewBox="0 0 26 24"><g fill="#f0962a"><rect x="0" y="4.5" width="2.6" height="3"/><rect x="0" y="9.5" width="2.6" height="3"/><rect x="0" y="14.5" width="2.6" height="3"/><rect x="5" y="4.5" width="19" height="3"/><rect x="5" y="9.5" width="19" height="3"/><rect x="5" y="14.5" width="19" height="3"/></g></svg></div>
<div class="a" style="left:34px;top:2px"><svg width="23" height="23" viewBox="0 0 23 23"><rect x="1" y="1.5" width="21" height="20.5" rx="1" fill="#545454"/><g fill="#d8d8d8"><rect x="10.4" y="5.4" width="2.2" height="2.6" transform="rotate(0 11.5 11.8)"/><rect x="10.4" y="5.4" width="2.2" height="2.6" transform="rotate(45 11.5 11.8)"/><rect x="10.4" y="5.4" width="2.2" height="2.6" transform="rotate(90 11.5 11.8)"/><rect x="10.4" y="5.4" width="2.2" height="2.6" transform="rotate(135 11.5 11.8)"/><rect x="10.4" y="5.4" width="2.2" height="2.6" transform="rotate(180 11.5 11.8)"/><rect x="10.4" y="5.4" width="2.2" height="2.6" transform="rotate(225 11.5 11.8)"/><rect x="10.4" y="5.4" width="2.2" height="2.6" transform="rotate(270 11.5 11.8)"/><rect x="10.4" y="5.4" width="2.2" height="2.6" transform="rotate(315 11.5 11.8)"/><circle cx="11.5" cy="11.8" r="4"/></g><circle cx="11.5" cy="11.8" r="2" fill="#3a4a60"/></svg></div>
<div class="a" style="left:63px;top:3px"><svg width="25" height="23" viewBox="0 0 25 23"><rect x="3" y="9" width="19" height="13" fill="#8a98a8"/><rect x="5" y="14" width="15" height="3" fill="#a8b4c0"/><path d="M1 3 Q1 1.5 2.5 1.5 H22.5 Q24 1.5 24 3 L21 9.5 H4 Z" fill="#1a7ae8"/><rect x="0.5" y="4" width="3" height="18" fill="#e8d8d8" opacity="0.85"/><rect x="21.5" y="4" width="3" height="18" fill="#e8d8d8" opacity="0.85"/></svg></div>
<div class="c" style="left:96px">Балетки з шипами Ж червоні шкіра 230590 McQueen McQueen B...</div>
<div class="c" style="left:536px">2973090000664</div>
<div class="c cr" style="right:414px">1 500,00</div>
<div class="c cr" style="right:292px">1 500,00</div>
<div class="c cr" style="right:207px">1</div>
<div class="c" style="left:1186px">500,00</div>
</div>
<div class="r sel" style="top:601.96px;height:28.83px">
<div class="a" style="left:4px;top:3px"><svg width="26" height="24" viewBox="0 0 26 24"><g fill="#f0962a"><rect x="0" y="4.5" width="2.6" height="3"/><rect x="0" y="9.5" width="2.6" height="3"/><rect x="0" y="14.5" width="2.6" height="3"/><rect x="5" y="4.5" width="19" height="3"/><rect x="5" y="9.5" width="19" height="3"/><rect x="5" y="14.5" width="19" height="3"/></g></svg></div>
<div class="a" style="left:34px;top:2px"><svg width="23" height="23" viewBox="0 0 23 23"><rect x="1" y="1.5" width="21" height="20.5" rx="1" fill="#545454"/><g fill="#d8d8d8"><rect x="10.4" y="5.4" width="2.2" height="2.6" transform="rotate(0 11.5 11.8)"/><rect x="10.4" y="5.4" width="2.2" height="2.6" transform="rotate(45 11.5 11.8)"/><rect x="10.4" y="5.4" width="2.2" height="2.6" transform="rotate(90 11.5 11.8)"/><rect x="10.4" y="5.4" width="2.2" height="2.6" transform="rotate(135 11.5 11.8)"/><rect x="10.4" y="5.4" width="2.2" height="2.6" transform="rotate(180 11.5 11.8)"/><rect x="10.4" y="5.4" width="2.2" height="2.6" transform="rotate(225 11.5 11.8)"/><rect x="10.4" y="5.4" width="2.2" height="2.6" transform="rotate(270 11.5 11.8)"/><rect x="10.4" y="5.4" width="2.2" height="2.6" transform="rotate(315 11.5 11.8)"/><circle cx="11.5" cy="11.8" r="4"/></g><circle cx="11.5" cy="11.8" r="2" fill="#3a4a60"/></svg></div>
<div class="a" style="left:63px;top:3px"><svg width="25" height="23" viewBox="0 0 25 23"><rect x="3" y="9" width="19" height="13" fill="#8a98a8"/><rect x="5" y="14" width="15" height="3" fill="#a8b4c0"/><path d="M1 3 Q1 1.5 2.5 1.5 H22.5 Q24 1.5 24 3 L21 9.5 H4 Z" fill="#1a7ae8"/><rect x="0.5" y="4" width="3" height="18" fill="#e8d8d8" opacity="0.85"/><rect x="21.5" y="4" width="3" height="18" fill="#e8d8d8" opacity="0.85"/></svg></div>
<div class="c" style="left:96px">Ботильйони та черевики на підборах Ж чорний шкіра 230593 Fusi...</div>
<div class="c" style="left:536px">2973090000671</div>
<div class="c cr" style="right:414px">1 600,00</div>
<div class="c cr" style="right:292px">1 600,00</div>
<div class="c cr" style="right:207px">1</div>
<div class="c" style="left:1186px">550,00</div>
</div>
<div class="r sel" style="top:630.79px;height:28.83px">
<div class="a" style="left:4px;top:3px"><svg width="26" height="24" viewBox="0 0 26 24"><g fill="#f0962a"><rect x="0" y="4.5" width="2.6" height="3"/><rect x="0" y="9.5" width="2.6" height="3"/><rect x="0" y="14.5" width="2.6" height="3"/><rect x="5" y="4.5" width="19" height="3"/><rect x="5" y="9.5" width="19" height="3"/><rect x="5" y="14.5" width="19" height="3"/></g></svg></div>
<div class="a" style="left:34px;top:2px"><svg width="23" height="23" viewBox="0 0 23 23"><rect x="1" y="1.5" width="21" height="20.5" rx="1" fill="#545454"/><g fill="#d8d8d8"><rect x="10.4" y="5.4" width="2.2" height="2.6" transform="rotate(0 11.5 11.8)"/><rect x="10.4" y="5.4" width="2.2" height="2.6" transform="rotate(45 11.5 11.8)"/><rect x="10.4" y="5.4" width="2.2" height="2.6" transform="rotate(90 11.5 11.8)"/><rect x="10.4" y="5.4" width="2.2" height="2.6" transform="rotate(135 11.5 11.8)"/><rect x="10.4" y="5.4" width="2.2" height="2.6" transform="rotate(180 11.5 11.8)"/><rect x="10.4" y="5.4" width="2.2" height="2.6" transform="rotate(225 11.5 11.8)"/><rect x="10.4" y="5.4" width="2.2" height="2.6" transform="rotate(270 11.5 11.8)"/><rect x="10.4" y="5.4" width="2.2" height="2.6" transform="rotate(315 11.5 11.8)"/><circle cx="11.5" cy="11.8" r="4"/></g><circle cx="11.5" cy="11.8" r="2" fill="#3a4a60"/></svg></div>
<div class="a" style="left:63px;top:3px"><svg width="25" height="23" viewBox="0 0 25 23"><rect x="3" y="9" width="19" height="13" fill="#8a98a8"/><rect x="5" y="14" width="15" height="3" fill="#a8b4c0"/><path d="M1 3 Q1 1.5 2.5 1.5 H22.5 Q24 1.5 24 3 L21 9.5 H4 Z" fill="#1a7ae8"/><rect x="0.5" y="4" width="3" height="18" fill="#e8d8d8" opacity="0.85"/><rect x="21.5" y="4" width="3" height="18" fill="#e8d8d8" opacity="0.85"/></svg></div>
<div class="c" style="left:96px">Ботильйони та черевики на підборах Ж чорний шкіра 230593 Fusi...</div>
<div class="c" style="left:536px">2973090000688</div>
<div class="c cr" style="right:414px">1 600,00</div>
<div class="c cr" style="right:292px">1 600,00</div>
<div class="c cr" style="right:207px">1</div>
<div class="c" style="left:1186px">550,00</div>
</div>
<div class="r sel" style="top:659.62px;height:28.83px">
<div class="a" style="left:4px;top:3px"><svg width="26" height="24" viewBox="0 0 26 24"><g fill="#f0962a"><rect x="0" y="4.5" width="2.6" height="3"/><rect x="0" y="9.5" width="2.6" height="3"/><rect x="0" y="14.5" width="2.6" height="3"/><rect x="5" y="4.5" width="19" height="3"/><rect x="5" y="9.5" width="19" height="3"/><rect x="5" y="14.5" width="19" height="3"/></g></svg></div>
<div class="a" style="left:34px;top:2px"><svg width="23" height="23" viewBox="0 0 23 23"><rect x="1" y="1.5" width="21" height="20.5" rx="1" fill="#545454"/><g fill="#d8d8d8"><rect x="10.4" y="5.4" width="2.2" height="2.6" transform="rotate(0 11.5 11.8)"/><rect x="10.4" y="5.4" width="2.2" height="2.6" transform="rotate(45 11.5 11.8)"/><rect x="10.4" y="5.4" width="2.2" height="2.6" transform="rotate(90 11.5 11.8)"/><rect x="10.4" y="5.4" width="2.2" height="2.6" transform="rotate(135 11.5 11.8)"/><rect x="10.4" y="5.4" width="2.2" height="2.6" transform="rotate(180 11.5 11.8)"/><rect x="10.4" y="5.4" width="2.2" height="2.6" transform="rotate(225 11.5 11.8)"/><rect x="10.4" y="5.4" width="2.2" height="2.6" transform="rotate(270 11.5 11.8)"/><rect x="10.4" y="5.4" width="2.2" height="2.6" transform="rotate(315 11.5 11.8)"/><circle cx="11.5" cy="11.8" r="4"/></g><circle cx="11.5" cy="11.8" r="2" fill="#3a4a60"/></svg></div>
<div class="a" style="left:63px;top:3px"><svg width="25" height="23" viewBox="0 0 25 23"><rect x="3" y="9" width="19" height="13" fill="#8a98a8"/><rect x="5" y="14" width="15" height="3" fill="#a8b4c0"/><path d="M1 3 Q1 1.5 2.5 1.5 H22.5 Q24 1.5 24 3 L21 9.5 H4 Z" fill="#1a7ae8"/><rect x="0.5" y="4" width="3" height="18" fill="#e8d8d8" opacity="0.85"/><rect x="21.5" y="4" width="3" height="18" fill="#e8d8d8" opacity="0.85"/></svg></div>
<div class="c" style="left:96px">Ботильйони та черевики на шнурівці Ж бірюзові замша 230594 M...</div>
<div class="c" style="left:536px">2973090000695</div>
<div class="c cr" style="right:414px">1 400,00</div>
<div class="c cr" style="right:292px">1 400,00</div>
<div class="c cr" style="right:207px">1</div>
<div class="c" style="left:1186px">350,00</div>
</div>
<div class="r sel" style="top:688.45px;height:28.83px">
<div class="a" style="left:4px;top:3px"><svg width="26" height="24" viewBox="0 0 26 24"><g fill="#f0962a"><rect x="0" y="4.5" width="2.6" height="3"/><rect x="0" y="9.5" width="2.6" height="3"/><rect x="0" y="14.5" width="2.6" height="3"/><rect x="5" y="4.5" width="19" height="3"/><rect x="5" y="9.5" width="19" height="3"/><rect x="5" y="14.5" width="19" height="3"/></g></svg></div>
<div class="a" style="left:34px;top:2px"><svg width="23" height="23" viewBox="0 0 23 23"><rect x="1" y="1.5" width="21" height="20.5" rx="1" fill="#545454"/><g fill="#d8d8d8"><rect x="10.4" y="5.4" width="2.2" height="2.6" transform="rotate(0 11.5 11.8)"/><rect x="10.4" y="5.4" width="2.2" height="2.6" transform="rotate(45 11.5 11.8)"/><rect x="10.4" y="5.4" width="2.2" height="2.6" transform="rotate(90 11.5 11.8)"/><rect x="10.4" y="5.4" width="2.2" height="2.6" transform="rotate(135 11.5 11.8)"/><rect x="10.4" y="5.4" width="2.2" height="2.6" transform="rotate(180 11.5 11.8)"/><rect x="10.4" y="5.4" width="2.2" height="2.6" transform="rotate(225 11.5 11.8)"/><rect x="10.4" y="5.4" width="2.2" height="2.6" transform="rotate(270 11.5 11.8)"/><rect x="10.4" y="5.4" width="2.2" height="2.6" transform="rotate(315 11.5 11.8)"/><circle cx="11.5" cy="11.8" r="4"/></g><circle cx="11.5" cy="11.8" r="2" fill="#3a4a60"/></svg></div>
<div class="a" style="left:63px;top:3px"><svg width="25" height="23" viewBox="0 0 25 23"><rect x="3" y="9" width="19" height="13" fill="#8a98a8"/><rect x="5" y="14" width="15" height="3" fill="#a8b4c0"/><path d="M1 3 Q1 1.5 2.5 1.5 H22.5 Q24 1.5 24 3 L21 9.5 H4 Z" fill="#1a7ae8"/><rect x="0.5" y="4" width="3" height="18" fill="#e8d8d8" opacity="0.85"/><rect x="21.5" y="4" width="3" height="18" fill="#e8d8d8" opacity="0.85"/></svg></div>
<div class="c" style="left:96px">Ботильйони та черевики на шнурівці Ж бірюзові замша 230594 M...</div>
<div class="c" style="left:536px">2973090000701</div>
<div class="c cr" style="right:414px">1 400,00</div>
<div class="c cr" style="right:292px">1 400,00</div>
<div class="c cr" style="right:207px">1</div>
<div class="c" style="left:1186px">350,00</div>
</div>
<div class="r sel" style="top:717.28px;height:28.83px">
<div class="a" style="left:4px;top:3px"><svg width="26" height="24" viewBox="0 0 26 24"><g fill="#f0962a"><rect x="0" y="4.5" width="2.6" height="3"/><rect x="0" y="9.5" width="2.6" height="3"/><rect x="0" y="14.5" width="2.6" height="3"/><rect x="5" y="4.5" width="19" height="3"/><rect x="5" y="9.5" width="19" height="3"/><rect x="5" y="14.5" width="19" height="3"/></g></svg></div>
<div class="a" style="left:34px;top:2px"><svg width="23" height="23" viewBox="0 0 23 23"><rect x="1" y="1.5" width="21" height="20.5" rx="1" fill="#545454"/><g fill="#d8d8d8"><rect x="10.4" y="5.4" width="2.2" height="2.6" transform="rotate(0 11.5 11.8)"/><rect x="10.4" y="5.4" width="2.2" height="2.6" transform="rotate(45 11.5 11.8)"/><rect x="10.4" y="5.4" width="2.2" height="2.6" transform="rotate(90 11.5 11.8)"/><rect x="10.4" y="5.4" width="2.2" height="2.6" transform="rotate(135 11.5 11.8)"/><rect x="10.4" y="5.4" width="2.2" height="2.6" transform="rotate(180 11.5 11.8)"/><rect x="10.4" y="5.4" width="2.2" height="2.6" transform="rotate(225 11.5 11.8)"/><rect x="10.4" y="5.4" width="2.2" height="2.6" transform="rotate(270 11.5 11.8)"/><rect x="10.4" y="5.4" width="2.2" height="2.6" transform="rotate(315 11.5 11.8)"/><circle cx="11.5" cy="11.8" r="4"/></g><circle cx="11.5" cy="11.8" r="2" fill="#3a4a60"/></svg></div>
<div class="a" style="left:63px;top:3px"><svg width="25" height="23" viewBox="0 0 25 23"><rect x="3" y="9" width="19" height="13" fill="#8a98a8"/><rect x="5" y="14" width="15" height="3" fill="#a8b4c0"/><path d="M1 3 Q1 1.5 2.5 1.5 H22.5 Q24 1.5 24 3 L21 9.5 H4 Z" fill="#1a7ae8"/><rect x="0.5" y="4" width="3" height="18" fill="#e8d8d8" opacity="0.85"/><rect x="21.5" y="4" width="3" height="18" fill="#e8d8d8" opacity="0.85"/></svg></div>
<div class="c" style="left:96px">Ботильйони та черевики на шнурівці Ж бірюзові замша 230594 M...</div>
<div class="c" style="left:536px">2973090000718</div>
<div class="c cr" style="right:414px">1 400,00</div>
<div class="c cr" style="right:292px">1 400,00</div>
<div class="c cr" style="right:207px">1</div>
<div class="c" style="left:1186px">350,00</div>
</div>
<div class="r sel" style="top:746.11px;height:28.83px">
<div class="a" style="left:4px;top:3px"><svg width="26" height="24" viewBox="0 0 26 24"><g fill="#f0962a"><rect x="0" y="4.5" width="2.6" height="3"/><rect x="0" y="9.5" width="2.6" height="3"/><rect x="0" y="14.5" width="2.6" height="3"/><rect x="5" y="4.5" width="19" height="3"/><rect x="5" y="9.5" width="19" height="3"/><rect x="5" y="14.5" width="19" height="3"/></g></svg></div>
<div class="a" style="left:34px;top:2px"><svg width="23" height="23" viewBox="0 0 23 23"><rect x="1" y="1.5" width="21" height="20.5" rx="1" fill="#545454"/><g fill="#d8d8d8"><rect x="10.4" y="5.4" width="2.2" height="2.6" transform="rotate(0 11.5 11.8)"/><rect x="10.4" y="5.4" width="2.2" height="2.6" transform="rotate(45 11.5 11.8)"/><rect x="10.4" y="5.4" width="2.2" height="2.6" transform="rotate(90 11.5 11.8)"/><rect x="10.4" y="5.4" width="2.2" height="2.6" transform="rotate(135 11.5 11.8)"/><rect x="10.4" y="5.4" width="2.2" height="2.6" transform="rotate(180 11.5 11.8)"/><rect x="10.4" y="5.4" width="2.2" height="2.6" transform="rotate(225 11.5 11.8)"/><rect x="10.4" y="5.4" width="2.2" height="2.6" transform="rotate(270 11.5 11.8)"/><rect x="10.4" y="5.4" width="2.2" height="2.6" transform="rotate(315 11.5 11.8)"/><circle cx="11.5" cy="11.8" r="4"/></g><circle cx="11.5" cy="11.8" r="2" fill="#3a4a60"/></svg></div>
<div class="a" style="left:63px;top:3px"><svg width="25" height="23" viewBox="0 0 25 23"><rect x="3" y="9" width="19" height="13" fill="#8a98a8"/><rect x="5" y="14" width="15" height="3" fill="#a8b4c0"/><path d="M1 3 Q1 1.5 2.5 1.5 H22.5 Q24 1.5 24 3 L21 9.5 H4 Z" fill="#1a7ae8"/><rect x="0.5" y="4" width="3" height="18" fill="#e8d8d8" opacity="0.85"/><rect x="21.5" y="4" width="3" height="18" fill="#e8d8d8" opacity="0.85"/></svg></div>
<div class="c" style="left:96px">Ботильйони та черевики на шнурівці Ж бірюзові замша 230594 M...</div>
<div class="c" style="left:536px">2973090000725</div>
<div class="c cr" style="right:414px">1 400,00</div>
<div class="c cr" style="right:292px">1 400,00</div>
<div class="c cr" style="right:207px">1</div>
<div class="c" style="left:1186px">350,00</div>
</div>
<div class="r sel" style="top:774.94px;height:28.83px">
<div class="a" style="left:4px;top:3px"><svg width="26" height="24" viewBox="0 0 26 24"><g fill="#f0962a"><rect x="0" y="4.5" width="2.6" height="3"/><rect x="0" y="9.5" width="2.6" height="3"/><rect x="0" y="14.5" width="2.6" height="3"/><rect x="5" y="4.5" width="19" height="3"/><rect x="5" y="9.5" width="19" height="3"/><rect x="5" y="14.5" width="19" height="3"/></g></svg></div>
<div class="a" style="left:34px;top:2px"><svg width="23" height="23" viewBox="0 0 23 23"><rect x="1" y="1.5" width="21" height="20.5" rx="1" fill="#545454"/><g fill="#d8d8d8"><rect x="10.4" y="5.4" width="2.2" height="2.6" transform="rotate(0 11.5 11.8)"/><rect x="10.4" y="5.4" width="2.2" height="2.6" transform="rotate(45 11.5 11.8)"/><rect x="10.4" y="5.4" width="2.2" height="2.6" transform="rotate(90 11.5 11.8)"/><rect x="10.4" y="5.4" width="2.2" height="2.6" transform="rotate(135 11.5 11.8)"/><rect x="10.4" y="5.4" width="2.2" height="2.6" transform="rotate(180 11.5 11.8)"/><rect x="10.4" y="5.4" width="2.2" height="2.6" transform="rotate(225 11.5 11.8)"/><rect x="10.4" y="5.4" width="2.2" height="2.6" transform="rotate(270 11.5 11.8)"/><rect x="10.4" y="5.4" width="2.2" height="2.6" transform="rotate(315 11.5 11.8)"/><circle cx="11.5" cy="11.8" r="4"/></g><circle cx="11.5" cy="11.8" r="2" fill="#3a4a60"/></svg></div>
<div class="a" style="left:63px;top:3px"><svg width="25" height="23" viewBox="0 0 25 23"><rect x="3" y="9" width="19" height="13" fill="#8a98a8"/><rect x="5" y="14" width="15" height="3" fill="#a8b4c0"/><path d="M1 3 Q1 1.5 2.5 1.5 H22.5 Q24 1.5 24 3 L21 9.5 H4 Z" fill="#1a7ae8"/><rect x="0.5" y="4" width="3" height="18" fill="#e8d8d8" opacity="0.85"/><rect x="21.5" y="4" width="3" height="18" fill="#e8d8d8" opacity="0.85"/></svg></div>
<div class="c" style="left:96px">Ботильйони та черевики на шнурівці Ж бірюзові замша 230594 M...</div>
<div class="c" style="left:536px">2973090000732</div>
<div class="c cr" style="right:414px">1 400,00</div>
<div class="c cr" style="right:292px">1 400,00</div>
<div class="c cr" style="right:207px">1</div>
<div class="c" style="left:1186px">350,00</div>
</div>
<div class="r" style="top:803.77px;height:28.83px">
<div class="a" style="left:4px;top:3px"><svg width="26" height="24" viewBox="0 0 26 24"><g fill="#f0962a"><rect x="0" y="4.5" width="2.6" height="3"/><rect x="0" y="9.5" width="2.6" height="3"/><rect x="0" y="14.5" width="2.6" height="3"/><rect x="5" y="4.5" width="19" height="3"/><rect x="5" y="9.5" width="19" height="3"/><rect x="5" y="14.5" width="19" height="3"/></g></svg></div>
<div class="a" style="left:34px;top:5px"><svg width="24" height="22" viewBox="0 0 24 22"><rect x="0.5" y="1" width="22" height="19" rx="1.5" fill="#8a8f96"/><path d="M3.5 1 H19.5 V6 Q19.5 8 17.5 8 H5.5 Q3.5 8 3.5 6 Z" fill="#1a78e6" stroke="#d8ecff" stroke-width="1"/><rect x="3" y="13.5" width="17" height="4" fill="#fff"/></svg></div>
<div class="c" style="left:66px">Кросівки 3 Fashion Україна</div>
<div class="c" style="left:536px">2911200012602</div>
<div class="c cr" style="right:414px">880,00</div>
<div class="c cr" style="right:292px">880,00</div>
<div class="c cr" style="right:207px">1</div>
<div class="c" style="left:1186px">550,00</div>
</div>
<div class="r" style="top:832.60px;height:28.83px">
<div class="a" style="left:4px;top:3px"><svg width="26" height="24" viewBox="0 0 26 24"><g fill="#f0962a"><rect x="0" y="4.5" width="2.6" height="3"/><rect x="0" y="9.5" width="2.6" height="3"/><rect x="0" y="14.5" width="2.6" height="3"/><rect x="5" y="4.5" width="19" height="3"/><rect x="5" y="9.5" width="19" height="3"/><rect x="5" y="14.5" width="19" height="3"/></g></svg></div>
<div class="a" style="left:34px;top:5px"><svg width="24" height="22" viewBox="0 0 24 22"><rect x="0.5" y="1" width="22" height="19" rx="1.5" fill="#8a8f96"/><path d="M3.5 1 H19.5 V6 Q19.5 8 17.5 8 H5.5 Q3.5 8 3.5 6 Z" fill="#1a78e6" stroke="#d8ecff" stroke-width="1"/><rect x="3" y="13.5" width="17" height="4" fill="#fff"/></svg></div>
<div class="c" style="left:66px">Кросівки 5 Fashion Україна</div>
<div class="c" style="left:536px">2911200012619</div>
<div class="c cr" style="right:414px">880,00</div>
<div class="c cr" style="right:292px">880,00</div>
<div class="c cr" style="right:207px">1</div>
<div class="c" style="left:1186px">500,00</div>
</div>
<div class="r" style="top:861.43px;height:28.83px">
<div class="a" style="left:4px;top:3px"><svg width="26" height="24" viewBox="0 0 26 24"><g fill="#f0962a"><rect x="0" y="4.5" width="2.6" height="3"/><rect x="0" y="9.5" width="2.6" height="3"/><rect x="0" y="14.5" width="2.6" height="3"/><rect x="5" y="4.5" width="19" height="3"/><rect x="5" y="9.5" width="19" height="3"/><rect x="5" y="14.5" width="19" height="3"/></g></svg></div>
<div class="a" style="left:34px;top:5px"><svg width="24" height="22" viewBox="0 0 24 22"><rect x="0.5" y="1" width="22" height="19" rx="1.5" fill="#8a8f96"/><path d="M3.5 1 H19.5 V6 Q19.5 8 17.5 8 H5.5 Q3.5 8 3.5 6 Z" fill="#1a78e6" stroke="#d8ecff" stroke-width="1"/><rect x="3" y="13.5" width="17" height="4" fill="#fff"/></svg></div>
<div class="c" style="left:66px">Кросівки з подвійною підошвою Ж білі 36(р)</div>
<div class="c" style="left:536px">2911200012626</div>
<div class="c cr" style="right:414px">880,00</div>
<div class="c cr" style="right:292px">880,00</div>
<div class="c cr" style="right:207px">1</div>
<div class="c" style="left:1186px">400,00</div>
</div>
<div class="r" style="top:890.26px;height:28.83px">
<div class="a" style="left:4px;top:3px"><svg width="24" height="24" viewBox="0 0 24 24"><path d="M12 2 L21.5 10 L12 18 L2.5 10 Z" fill="none" stroke="#f0a040" stroke-width="1.8"/><path d="M3 14 L12 21.5 L21 14" fill="none" stroke="#f0a040" stroke-width="1.8"/></svg></div>
<div class="a" style="left:34px;top:5px"><svg width="24" height="22" viewBox="0 0 24 22"><rect x="0.5" y="1" width="22" height="19" rx="1.5" fill="#8a8f96"/><path d="M3.5 1 H19.5 V6 Q19.5 8 17.5 8 H5.5 Q3.5 8 3.5 6 Z" fill="#1a78e6" stroke="#d8ecff" stroke-width="1"/><rect x="3" y="13.5" width="17" height="4" fill="#fff"/></svg></div>
<div class="c" style="left:66px">Кросівки з подвійною підошвою Ж білі 37(р)</div>
<div class="c" style="left:536px">2911200012633</div>
<div class="c cr" style="right:414px">880,00</div>
<div class="c cr" style="right:292px">880,00</div>
<div class="c cr" style="right:207px">1</div>
<div class="c" style="left:1186px">400,00</div>
</div>
<div class="r" style="top:919.09px;height:28.83px">
<div class="a" style="left:4px;top:3px"><svg width="26" height="24" viewBox="0 0 26 24"><g fill="#f0962a"><rect x="0" y="4.5" width="2.6" height="3"/><rect x="0" y="9.5" width="2.6" height="3"/><rect x="0" y="14.5" width="2.6" height="3"/><rect x="5" y="4.5" width="19" height="3"/><rect x="5" y="9.5" width="19" height="3"/><rect x="5" y="14.5" width="19" height="3"/></g></svg></div>
<div class="a" style="left:34px;top:5px"><svg width="24" height="22" viewBox="0 0 24 22"><rect x="0.5" y="1" width="22" height="19" rx="1.5" fill="#8a8f96"/><path d="M3.5 1 H19.5 V6 Q19.5 8 17.5 8 H5.5 Q3.5 8 3.5 6 Z" fill="#1a78e6" stroke="#d8ecff" stroke-width="1"/><rect x="3" y="13.5" width="17" height="4" fill="#fff"/></svg></div>
<div class="c" style="left:66px">Кросівки з подвійною підошвою Ж білі 38(р)</div>
<div class="c" style="left:536px">2911200012640</div>
<div class="c cr" style="right:414px">880,00</div>
<div class="c cr" style="right:292px">880,00</div>
<div class="c cr" style="right:207px">1</div>
<div class="c" style="left:1186px">400,00</div>
</div>
<div class="a" style="left:552px;top:296px;width:552px;height:623px;background:#ebeef0;border:1px solid #c6c6c6;border-top-color:#d8e4ea"></div>
<div class="a" style="left:555px;top:299px;width:546px;height:617px;border:1px solid #f6f6f6"></div>
<div class="a" style="left:559px;top:303px;width:538px;height:610px;background:#eeeeee"></div>
<div class="a" style="left:559px;top:303px;width:538px;height:32px;background:#dadada"></div>
<div class="a" style="left:562px;top:307px"><svg width="16" height="16" viewBox="0 0 16 16"><g fill="#111"><circle cx="8" cy="8" r="5.5"/><rect x="6.6" y="0.5" width="2.8" height="4" transform="rotate(0 8 8)"/><rect x="6.6" y="0.5" width="2.8" height="4" transform="rotate(45 8 8)"/><rect x="6.6" y="0.5" width="2.8" height="4" transform="rotate(90 8 8)"/><rect x="6.6" y="0.5" width="2.8" height="4" transform="rotate(135 8 8)"/><rect x="6.6" y="0.5" width="2.8" height="4" transform="rotate(180 8 8)"/><rect x="6.6" y="0.5" width="2.8" height="4" transform="rotate(225 8 8)"/><rect x="6.6" y="0.5" width="2.8" height="4" transform="rotate(270 8 8)"/><rect x="6.6" y="0.5" width="2.8" height="4" transform="rotate(315 8 8)"/></g><circle cx="8" cy="8" r="2.4" fill="#dadada"/></svg></div>
<div class="t" style="left:590px;top:311px;font-size:14.7px;font-weight:bold">Параметри змінення цін на складі</div>
<div class="a" style="left:1066px;top:308px"><svg width="15" height="15" viewBox="0 0 15 15"><path d="M1 1 L14 14 M14 1 L1 14" stroke="#222" stroke-width="1.3"/></svg></div>

<!-- direction row -->
<div class="a" style="left:590px;top:366px"><svg width="20" height="27" viewBox="0 0 20 27"><path d="M9.5 1.5 L18 10 L13.5 10 C13.5 15 15 20 18.5 25.5 C11 23 6 17.5 6 10 L1.5 10 Z" fill="#f01a10"/></svg></div>
<div class="a" style="left:622px;top:369px;width:18px;height:18px;border-radius:50%;border:5px solid #1f80ee;background:#fff"></div>
<div class="t" style="left:643px;top:372px;font-size:13.6px">Збільшити</div>
<div class="a" style="left:736px;top:366px"><svg width="22" height="27" viewBox="0 0 22 27"><path d="M1.5 1.5 C8 2.5 14.5 8 15 16.5 L19.5 16.5 L11 24.5 L2 16.5 L7 16.5 C7 11 5.5 6 1.5 1.5 Z" fill="#1a78ea"/></svg></div>
<div class="a" style="left:769px;top:369px;width:18px;height:18px;border-radius:50%;border:1.5px solid #bdbdbd;background:#fff"></div>
<div class="t" style="left:790px;top:372px;font-size:13.6px">Зменшити</div>
<div class="a" style="left:887px;top:367px"><svg width="25" height="19" viewBox="0 0 25 19"><path d="M1 17.5 C2 11 7 7.5 14 7.5 L14 2 L23.5 10 L14 17.5 L14 12.5 C8.5 12 4.5 14 1 17.5 Z" fill="#22c45a"/></svg></div>
<div class="a" style="left:922px;top:369px;width:18px;height:18px;border-radius:50%;border:1.5px solid #bdbdbd;background:#fff"></div>
<div class="t" style="left:944px;top:372px;font-size:13.6px">Встановити</div>

<div class="t" style="left:580px;top:408px;font-size:13.6px">відпускні ціни на складі</div>

<!-- rounding group -->
<div class="a" style="left:943px;top:426px;width:140px;height:210px;border:1px solid #dedede;box-shadow:inset 1px 1px 0 #f8f8f8"></div>
<div class="a" style="left:953px;top:418px;width:76px;height:15px;background:#eeeeee"></div>
<div class="t" style="left:956px;top:418px;font-size:13.6px">Округлити</div>
<div class="a" style="left:957px;top:438.0px;width:17px;height:17px;border-radius:50%;border:1.5px solid #c4c4c4;background:#fff"></div>
<div class="t" style="left:979px;top:439.5px;font-size:13.6px">не округляти</div>
<div class="a" style="left:957px;top:463.0px;width:17px;height:17px;border-radius:50%;border:1.5px solid #c4c4c4;background:#fff"></div>
<div class="t" style="left:979px;top:464.5px;font-size:13.6px">до 10 коп</div>
<div class="a" style="left:957px;top:488.0px;width:17px;height:17px;border-radius:50%;border:1.5px solid #c4c4c4;background:#fff"></div>
<div class="t" style="left:979px;top:489.5px;font-size:13.6px">до 50 коп</div>
<div class="a" style="left:957px;top:513.0px;width:17px;height:17px;border-radius:50%;border:1.5px solid #c4c4c4;background:#fff"></div>
<div class="t" style="left:979px;top:514.5px;font-size:13.6px">до 1 грн</div>
<div class="a" style="left:957px;top:538.0px;width:17px;height:17px;border-radius:50%;border:1.5px solid #c4c4c4;background:#fff"></div>
<div class="t" style="left:979px;top:539.5px;font-size:13.6px">до 5 грн</div>
<div class="a" style="left:957px;top:563.0px;width:17px;height:17px;border-radius:50%;border:1.5px solid #c4c4c4;background:#fff"></div>
<div class="t" style="left:979px;top:564.5px;font-size:13.6px">до 10 грн</div>
<div class="a" style="left:957px;top:588.0px;width:17px;height:17px;border-radius:50%;border:1.5px solid #c4c4c4;background:#fff"></div>
<div class="t" style="left:979px;top:589.5px;font-size:13.6px">до 100 грн</div>
<div class="a" style="left:957px;top:613.0px;width:17px;height:17px;border-radius:50%;border:1.5px solid #c4c4c4;background:#fff"></div>
<div class="t" style="left:979px;top:614.5px;font-size:13.6px">до 1000 грн</div>
<!-- amount row -->
<div class="t" style="left:580px;top:458px;font-size:13.6px">на</div>
<div class="a" style="left:609px;top:450px;width:93px;height:28px;background:#fff;border:1px solid #cfcfcf"></div>
<div class="a" style="left:610px;top:452px;width:90px;height:24px;border:1px solid #d6d6d6;border-top:2px solid #cfcfcf"></div>
<div class="t" style="left:663px;top:457px;font-size:16px;transform:scaleX(0.9);transform-origin:0 0">5</div>
<div class="a" style="left:677px;top:454px"><svg width="16" height="20" viewBox="0 0 16 20"><rect x="0.5" y="0.5" width="15" height="19" fill="#3a3a3a"/><rect x="2.3" y="2.5" width="11.4" height="4.2" fill="#e8e8e8"/><rect x="2.6" y="8.6" width="2.4" height="2.2" fill="#fff"/><rect x="6.4" y="8.6" width="2.4" height="2.2" fill="#fff"/><rect x="10.2" y="8.6" width="2.4" height="2.2" fill="#fff"/><rect x="2.6" y="12.2" width="2.4" height="2.2" fill="#fff"/><rect x="6.4" y="12.2" width="2.4" height="2.2" fill="#fff"/><rect x="10.2" y="12.2" width="2.4" height="2.2" fill="#fff"/><rect x="2.6" y="15.8" width="2.4" height="2.2" fill="#fff"/><rect x="6.4" y="15.8" width="2.4" height="2.2" fill="#fff"/><rect x="10.2" y="15.8" width="2.4" height="2.2" fill="#fff"/></svg></div>
<div class="a" style="left:722px;top:455px;width:18px;height:18px;border-radius:50%;border:5px solid #1f80ee;background:#fff"></div>
<div class="t" style="left:744px;top:458px;font-size:13.6px">відсотків</div>
<div class="a" style="left:822px;top:456px;width:18px;height:18px;border-radius:50%;border:1.5px solid #bdbdbd;background:#fff"></div>
<div class="t" style="left:844px;top:458px;font-size:13.6px">грн</div>

<!-- checkboxes -->
<div class="a" style="left:581px;top:498px;width:17px;height:18px;border-radius:3px;border:1.5px solid #c4c4c4;background:#fff"></div>
<div class="t" style="left:603px;top:501px;font-size:13.6px">Роздрібна ціна</div>
<div class="a" style="left:768px;top:498px;width:17px;height:18px;border-radius:3px;border:1.5px solid #c4c4c4;background:#fff"></div>
<div class="t" style="left:791px;top:501px;font-size:13.6px">Оптова ціна</div>
<div class="a" style="left:581px;top:577px;width:17px;height:18px;border-radius:3px;border:1.5px solid #c4c4c4;background:#fff"></div>
<div class="t" style="left:603px;top:580px;font-size:13.6px">Уцінити</div>

<div class="t" style="left:580px;top:622px;font-size:15px;font-weight:bold">Змінення цін для 19 товарів</div>
<div class="t" style="left:580px;top:646px;font-size:13.8px">Перелік товарів, до яких буде застосовано змінення ціни</div>

<!-- listbox -->
<div class="a" style="left:579px;top:667px;width:505px;height:180px;background:#fff;border:1px solid #a9cdee"></div>
<div class="a" style="left:583px;top:672px;width:473px;height:164px;overflow:hidden">
<div class="t" style="left:0;top:0.00px;font-size:15px;transform:scaleX(0.909);transform-origin:0 0">Балетки Ж зелений замша 230592 Lady Sisley Італія 37(р)</div>
<div class="t" style="left:0;top:16.25px;font-size:15px;transform:scaleX(0.909);transform-origin:0 0">Балетки Ж зелений замша 230592 Lady Sisley Італія 38(р)</div>
<div class="t" style="left:0;top:32.50px;font-size:15px;transform:scaleX(0.909);transform-origin:0 0">Балетки Ж зелений замша 230592 Lady Sisley Італія 39(р)</div>
<div class="t" style="left:0;top:48.75px;font-size:15px;transform:scaleX(0.909);transform-origin:0 0">Балетки Ж зелений замша 230592 Lady Sisley Італія 40(р)</div>
<div class="t" style="left:0;top:65.00px;font-size:15px;transform:scaleX(0.909);transform-origin:0 0">Балетки з плетіннями Ж коричневий шкіра 230591 Fleur Parfois Португалія</div>
<div class="t" style="left:0;top:81.25px;font-size:15px;transform:scaleX(0.909);transform-origin:0 0">Балетки з плетіннями Ж коричневий шкіра 230591 Fleur Parfois Португалія</div>
<div class="t" style="left:0;top:97.50px;font-size:15px;transform:scaleX(0.909);transform-origin:0 0">Балетки з плетіннями Ж коричневий шкіра 230591 Fleur Parfois Португалія</div>
<div class="t" style="left:0;top:113.75px;font-size:15px;transform:scaleX(0.909);transform-origin:0 0">Балетки з шипами Ж червоні шкіра 230590 McQueen McQueen Великобританія</div>
<div class="t" style="left:0;top:130.00px;font-size:15px;transform:scaleX(0.909);transform-origin:0 0">Балетки з шипами Ж червоні шкіра 230590 McQueen McQueen Великобританія</div>
<div class="t" style="left:0;top:146.25px;font-size:15px;transform:scaleX(0.909);transform-origin:0 0">Балетки з шипами Ж червоні шкіра 230590 McQueen McQueen Великобританія</div>
<div class="t" style="left:0;top:162.50px;font-size:15px;transform:scaleX(0.909);transform-origin:0 0">Балетки з шипами Ж червоні шкіра 230590 McQueen McQueen Великобританія</div>
</div>
<div class="a" style="left:947.5px;top:720px;width:1.5px;height:16px;background:#000"></div>
<div class="a" style="left:1062px;top:692px;width:17px;height:65px;border-radius:3px;background:#bcbcbc"></div>
<div class="a" style="left:1064px;top:677px"><svg width="12" height="8" viewBox="0 0 12 8"><path d="M1.5 6.5 L6 2 L10.5 6.5" fill="none" stroke="#444" stroke-width="1.5"/></svg></div>
<div class="a" style="left:1064px;top:830px"><svg width="12" height="8" viewBox="0 0 12 8"><path d="M1.5 1.5 L6 6 L10.5 1.5" fill="none" stroke="#8a5a40" stroke-width="1.5"/></svg></div>

<!-- buttons -->
<div class="a" style="left:715px;top:871px;width:126px;height:31px;background:#fff;border:1px solid #c8c8c8;border-bottom:2px solid #c0c0c0;border-radius:3px"></div>
<div class="t" style="left:741px;top:880px;font-size:13.6px">Змінити ціну</div>
<div class="a" style="left:858px;top:871px;width:93px;height:31px;background:#fff;border:1px solid #c8c8c8;border-bottom:2px solid #c0c0c0;border-radius:3px"></div>
<div class="t" style="left:872px;top:880px;font-size:13.6px">Скасувати</div>

<svg class="a" style="left:0;top:0" width="1200" height="947" viewBox="0 0 1200 947"><path d="M539.5 210 L552.5 284" stroke="#f01e1e" stroke-width="2.2"/><path d="M548.5 281 L555.5 294.5 L558 279.5 Z" fill="#f01e1e"/></svg>
</body></html>
